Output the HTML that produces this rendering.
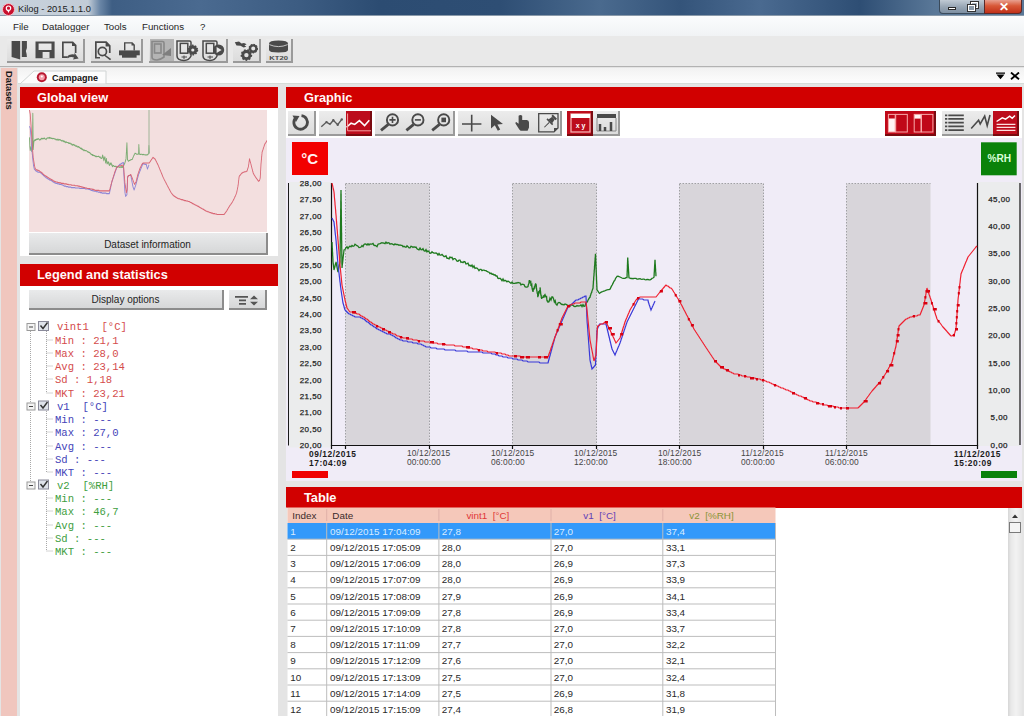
<!DOCTYPE html>
<html><head><meta charset="utf-8">
<style>
*{margin:0;padding:0;box-sizing:border-box}
html,body{width:1024px;height:718px;overflow:hidden;background:#e4e4e4;font-family:"Liberation Sans",sans-serif}
.a{position:absolute}
#title{left:0;top:0;width:1024px;height:16px;background:linear-gradient(90deg,#c9d3dd 0,#c2ccd7 88px,#6a86a6 100px,#3e5e84 112px,#4a6a90 200px,#3c5c82 300px,#2c4c72 380px,#2e4e74 500px,#4a6a8e 600px,#34547a 680px,#4a6a90 760px,#2e4e74 860px,#5a7898 935px);border-bottom:1px solid #8a9aaa}
#title .t{left:18px;top:3.5px;font-size:9.3px;color:#1a1a1a;white-space:nowrap}
#menu{left:0;top:16px;width:1024px;height:20px;background:linear-gradient(#fbfcfd,#f1f3f5)}
#menu span{position:absolute;top:5.3px;font-size:9.7px;color:#1e1e1e;white-space:nowrap}
#tool{left:0;top:36px;width:1024px;height:31px;background:#e9e9e9;border-bottom:1px solid #b2b2b2}
.grp{position:absolute;top:3px;height:24px;background:linear-gradient(#ececec,#dcdcdc);border-right:2px solid #9a9a9a;border-bottom:2px solid #9a9a9a}
#tabs{left:18px;top:68px;width:1006px;height:16px;background:linear-gradient(#f2f2f2,#fdfdfd);border-bottom:1px solid #d6dcd8}
#ds{left:1px;top:68px;width:16px;height:648px;background:#f0c6be}
.hdr{position:absolute;background:#d10000;color:#fff8f8;font-weight:bold;font-size:12.8px;line-height:21.5px}
.btn{position:absolute;background:linear-gradient(#e9eaeb,#d6d7d8);border-right:2px solid #8c8c8c;border-bottom:2px solid #8c8c8c;font-size:10px;color:#1e1e1e;text-align:center}
.mono{font-family:"Liberation Mono",monospace;font-size:10.6px;position:absolute;white-space:pre}
.r{color:#d44c4c}.b{color:#4444b8}.g{color:#3e9e3e}
table{border-collapse:collapse}
</style></head><body>
<!-- title bar -->
<div id="title" class="a">
 <svg class="a" style="left:2px;top:3px" width="13" height="13" viewBox="0 0 13 13"><circle cx="6.5" cy="6.5" r="6" fill="#c8102e" stroke="#f6c0c8" stroke-width="1"/><circle cx="6.5" cy="5.2" r="2.2" fill="none" stroke="#fff" stroke-width="1.2"/><path d="M5.2 7.2 L6.5 10 L7.8 7.2" fill="#fff"/></svg>
 <div class="a t">Kilog - 2015.1.1.0</div>
 <div class="a" style="left:939px;top:0;width:46px;height:14px;background:linear-gradient(#c0cad4,#9aa8b6 50%,#7d8fa2);border:1px solid #3a4a5a;border-top:none;border-radius:0 0 0 4px"></div>
 <div class="a" style="left:948px;top:7px;width:8px;height:3px;background:#fff;border:1px solid #2a2a2a"></div>
 <div class="a" style="left:971px;top:1.5px;width:7px;height:6px;border:1px solid #fff;outline:1px solid #333"></div>
 <div class="a" style="left:968px;top:4.5px;width:7px;height:6px;background:#8a9aaa;border:1px solid #fff;outline:1px solid #333"></div>
 <div class="a" style="left:984px;top:0;width:38px;height:14px;background:linear-gradient(#e8a090,#d85838 45%,#c03018);border:1px solid #5a2a2a;border-top:none;border-radius:0 0 4px 0"></div>
 <div class="a" style="left:998.5px;top:0.5px;font-size:12px;font-weight:bold;color:#fff;line-height:13px">&#x2715;</div>
</div>
<!-- menu -->
<div id="menu" class="a">
 <span style="left:13px">File</span><span style="left:42px">Datalogger</span><span style="left:104px">Tools</span><span style="left:142px">Functions</span><span style="left:200px">?</span>
</div>
<!-- toolbar -->
<div id="tool" class="a">
 <div class="grp" style="left:7px;width:78px"></div>
 <div class="grp" style="left:91px;width:52px"></div>
 <div class="grp" style="left:149px;width:79px"></div>
 <div class="a" style="left:150px;top:3px;width:24px;height:22px;background:#b4b4b4"></div>
 <div class="grp" style="left:233px;width:28px"></div>
 <div class="grp" style="left:266px;width:27px"></div>
 <svg class="a" style="left:0;top:0" width="300" height="31" viewBox="0 36 300 31">
  <g fill="#4a4a4a" stroke="none">
   <!-- open -->
   <path d="M11.6 41 H20.2 V59.4 L11.6 57 Z"/>
   <path d="M21.8 41 H26.9 V48 Q25 51 26.6 54 L26.9 57 H21.8 Z"/>
   <!-- save -->
   <path fill-rule="evenodd" d="M35.5 41.5 H54.6 V58.3 H35.5 Z M38.6 43.4 V50 H51.5 V43.4 Z M42.6 52 V57.9 H49.5 V52 Z"/>
   <!-- export doc -->
   <path d="M62 41.5 H73 L76.5 45 V53 H74.8 V46 H72 V43.2 H63.7 V56.2 H67 V57.9 H62 Z"/>
   <path d="M66.7 57 Q69 53.5 74.5 54.5 L74.5 52.8 L78.6 58.6 L73 59.6 L74 57.4 Q70 56.4 67.8 58.2 Z"/>
   <!-- preview -->
   <path d="M95 41.3 H106.5 L110.6 45.4 V53 H108.9 V46.4 H105.6 V43 H96.7 V56.9 H100 V58.6 H95 Z"/>
   <circle cx="102.4" cy="51.5" r="4.1" fill="none" stroke="#4a4a4a" stroke-width="1.7"/>
   <path d="M104.8 54.6 L111.2 59 L110 60.2 L103.9 55.6 Z"/>
   <!-- printer -->
   <path d="M124 42.2 H132.4 L134.9 44.8 V50.4 H133.5 V45.5 H131.5 V43.5 H125.4 V50.4 H124 Z"/>
   <path d="M119 50.4 H139.8 V55.3 H119 Z"/><path d="M122 54.7 H136.6 V57.7 H122 Z"/>
  </g>
  <!-- device download pressed -->
  <g fill="none" stroke="#7e7e7e" stroke-width="1.6" opacity="0.8">
   <path d="M152 41.5 H162.5 Q164 41.5 164 43 V57 Q160 60 157 60 Q152 60 152 57 Z"/>
   <rect x="154.5" y="44" width="6.5" height="9"/>
  </g>
  <path d="M162 55 L171 48 V56 Z" fill="#7e7e7e"/>
  <g fill="none" stroke="#4a4a4a" stroke-width="1.5">
   <path d="M177 41 H189.5 Q191 41 191 42.5 V56 Q189 60.4 184 60.4 Q177 60.4 177 56 Z"/>
   <rect x="180.3" y="43.4" width="7.5" height="9.8"/>
   <path d="M181.5 57 H187 M184 55.5 V59" stroke-width="1"/>
   <path d="M203 41 H215.5 Q217 41 217 42.5 V56 Q215 60.4 210 60.4 Q203 60.4 203 56 Z"/>
   <rect x="206.3" y="43.4" width="7.5" height="9.8"/>
   <path d="M207.5 57 H213 M210 55.5 V59" stroke-width="1"/>
  </g>
  <!-- gear on device 2 -->
  <circle cx="192.8" cy="50" r="4.6" fill="#4a4a4a" stroke="#4a4a4a" stroke-width="1.6" stroke-dasharray="1.6 1.3"/>
  <circle cx="192.8" cy="50" r="1.6" fill="#e6e6e6"/>
  <!-- play -->
  <circle cx="218.6" cy="50" r="5.6" fill="#4a4a4a"/>
  <path d="M216.6 47 L221.6 50 L216.6 53 Z" fill="#e8e8e8"/>
  <!-- wrench gears -->
  <path d="M234.8 42.3 L239 41.6 L241.5 43.5 L244 43 L246.6 44.3 L244.5 45.4 L246.4 46.8 L243.6 47.6 L240.5 45.8 L236.5 45.4 Z" fill="#4a4a4a"/>
  <circle cx="253.2" cy="48.6" r="3.2" fill="none" stroke="#4a4a4a" stroke-width="2.4"/>
  <circle cx="253.2" cy="48.6" r="4.2" fill="none" stroke="#4a4a4a" stroke-width="1.2" stroke-dasharray="1.5 1.3"/>
  <circle cx="246.4" cy="55.1" r="3.6" fill="none" stroke="#4a4a4a" stroke-width="2.8"/>
  <circle cx="246.4" cy="55.1" r="5" fill="none" stroke="#4a4a4a" stroke-width="1.6" stroke-dasharray="1.8 1.6"/>
  <!-- KT20 -->
  <path d="M269 43.5 Q269 40.5 278.5 40.5 Q288 40.5 288 43.5 V50 Q288 52.5 278.5 52.5 Q269 52.5 269 50 Z" fill="#4a4a4a"/>
  <path d="M269.3 44.6 Q278.5 48.6 287.7 44.6" fill="none" stroke="#cfcfcf" stroke-width="0.9"/>
  <text x="0" y="0" transform="translate(269.2,59.9) scale(1.3,1)" font-family="Liberation Sans" font-weight="bold" font-size="5.9" fill="#4a4a4a">KT20</text>
 </svg>
</div>
<!-- datasets strip -->
<div id="ds" class="a"><div class="a" style="left:2px;top:2.8px;width:12px;height:40px;font-size:9.3px;font-weight:bold;color:#1a1a1a;writing-mode:vertical-rl;line-height:12px">Datasets</div></div>
<!-- tab strip -->
<div id="tabs" class="a">
 <svg class="a" style="left:0;top:0" width="100" height="16" viewBox="18 68 100 16"><path d="M20 84 L34 71 H106 V84 Z" fill="#fcfcfc" stroke="#d0d4d4" stroke-width="1"/></svg>
 <svg class="a" style="left:18px;top:4px" width="12" height="11" viewBox="0 0 12 11"><circle cx="5.8" cy="5.3" r="5" fill="#b81830"/><circle cx="5.8" cy="5.3" r="3" fill="#f4a0ac"/><circle cx="5.8" cy="4.6" r="1" fill="#fff"/></svg>
 <div class="a" style="left:34px;top:4.5px;font-size:9px;font-weight:bold;color:#111">Campagne</div>
 <svg class="a" style="left:978px;top:4px" width="25" height="8" viewBox="978 72 25 8"><path d="M978 72.4 H987 V73.8 H978 Z M978.5 74.6 H986.5 L982.5 79.3 Z" fill="#000"/><path d="M993 72.5 L1001 79.3 M1001 72.5 L993 79.3" stroke="#000" stroke-width="1.8"/></svg>
</div>

<!-- LEFT PANEL -->
<div class="a" style="left:20px;top:107px;width:258px;height:148.5px;background:#fff"></div>
<div class="hdr" style="left:20px;top:87px;width:258px;height:21px;padding-left:17px">Global view</div>
<div class="a" style="left:29px;top:110px;width:238px;height:122px;background:#f3dfdf"></div>
<svg class="a" style="left:0;top:0;overflow:hidden" width="1024" height="718" viewBox="0 0 1024 718">
 <defs><clipPath id="gvc"><rect x="29" y="110" width="238" height="122"/></clipPath></defs>
 <g clip-path="url(#gvc)" fill="none" stroke-width="2.4" opacity="0.6" stroke-linejoin="round">
  <g transform="translate(-93.263,24.996) scale(0.36977,0.46450)">
   <polyline points="332.0,242.0 332.1,243.0 332.1,244.0 332.1,245.0 332.2,246.0 332.2,247.0 332.3,248.0 332.4,249.0 332.4,250.0 332.4,251.0 332.5,252.0 332.6,253.0 332.6,254.0 332.6,255.0 332.7,256.0 332.8,257.0 332.8,258.0 332.9,259.0 332.9,260.0 332.9,261.0 333.0,262.0 333.1,263.0 333.2,264.0 333.4,265.0 333.5,266.0 333.6,267.0 333.8,268.0 333.9,269.0 334.0,270.0 334.2,269.0 334.5,268.0 334.8,267.0 335.0,266.0 335.2,265.0 335.5,264.0 335.8,263.0 336.0,262.0 336.2,263.0 336.4,264.0 336.6,265.0 336.8,266.0 337.0,267.0 337.2,268.0 337.4,269.0 337.6,270.0 337.8,271.0 338.0,272.0 338.2,271.0 338.4,270.0 338.6,269.0 338.8,268.0 339.0,267.0 339.2,266.0 339.4,265.0 339.6,264.0 339.8,263.0 340.0,262.0 340.0,261.0 340.0,260.0 340.0,259.0 340.1,258.0 340.1,257.0 340.1,256.0 340.1,255.0 340.1,254.0 340.1,253.0 340.1,252.0 340.2,251.0 340.2,250.0 340.2,249.0 340.2,248.0 340.2,247.0 340.2,246.0 340.2,245.0 340.2,244.0 340.3,243.0 340.3,242.0 340.3,241.0 340.3,240.0 340.3,239.0 340.3,238.0 340.3,237.0 340.4,236.0 340.4,235.0 340.4,234.0 340.4,233.0 340.4,232.0 340.4,231.0 340.4,230.0 340.5,229.0 340.5,228.0 340.5,227.0 340.5,226.0 340.5,225.0 340.5,224.0 340.5,223.0 340.6,222.0 340.6,221.0 340.6,220.0 340.6,219.0 340.6,218.0 340.6,217.0 340.6,216.0 340.7,215.0 340.7,214.0 340.7,213.0 340.7,212.0 340.7,211.0 340.7,210.0 340.7,209.0 340.8,208.0 340.8,207.0 340.8,206.0 340.8,205.0 340.8,204.0 340.8,203.0 340.8,202.0 340.8,201.0 340.9,200.0 340.9,199.0 340.9,198.0 340.9,197.0 340.9,196.0 340.9,195.0 340.9,194.0 341.0,193.0 341.0,192.0 341.0,191.0 341.0,190.0 341.0,191.0 341.0,192.0 341.0,193.0 341.1,194.0 341.1,195.0 341.1,196.0 341.1,197.0 341.1,198.0 341.1,199.0 341.1,200.0 341.1,201.0 341.2,202.0 341.2,203.0 341.2,204.0 341.2,205.0 341.2,206.0 341.2,207.0 341.2,208.0 341.2,209.0 341.3,210.0 341.3,211.0 341.3,212.0 341.3,213.0 341.3,214.0 341.3,215.0 341.3,216.0 341.3,217.0 341.4,218.0 341.4,219.0 341.4,220.0 341.4,221.0 341.4,222.0 341.4,223.0 341.4,224.0 341.4,225.0 341.5,226.0 341.5,227.0 341.5,228.0 341.5,229.0 341.5,230.0 341.5,231.0 341.5,232.0 341.6,233.0 341.6,234.0 341.6,235.0 341.6,236.0 341.6,237.0 341.6,238.0 341.6,239.0 341.6,240.0 341.7,241.0 341.7,242.0 341.7,243.0 341.7,244.0 341.7,245.0 341.7,246.0 341.7,247.0 341.7,248.0 341.8,249.0 341.8,250.0 341.8,251.0 341.8,252.0 341.8,253.0 341.8,254.0 341.8,255.0 341.8,256.0 341.9,257.0 341.9,258.0 341.9,259.0 341.9,260.0 341.9,261.0 341.9,262.0 341.9,263.0 341.9,264.0 342.0,265.0 342.0,266.0 342.0,267.0 342.0,268.0 342.1,267.0 342.2,266.0 342.3,265.0 342.4,264.0 342.6,263.0 342.7,262.0 342.8,261.0 342.9,260.0 343.0,259.0 343.1,258.0 343.2,257.0 343.3,256.0 343.4,255.0 343.6,254.0 343.7,253.0 343.8,252.0 343.9,251.0 344.0,250.0 345.0,249.5 346.0,247.7 347.0,246.8 348.0,248.5 349.0,247.0 350.0,246.1 351.0,246.9 352.0,245.4 353.0,246.3 354.0,246.0 355.0,244.3 356.0,245.0 357.0,245.7 358.0,246.2 359.0,247.6 360.0,247.4 361.0,247.0 362.0,245.5 363.0,246.6 364.0,244.4 365.0,243.9 366.0,244.2 367.0,245.0 368.0,243.8 369.0,245.0 370.0,244.0 371.0,244.1 372.0,244.1 373.0,243.5 374.0,245.4 375.0,245.5 376.0,245.8 377.0,246.7 378.0,244.2 379.0,243.9 380.0,243.6 381.0,243.1 382.0,242.6 383.0,243.0 384.0,243.1 385.0,243.7 386.0,242.1 387.0,243.4 388.0,242.7 389.0,242.8 390.0,244.2 391.0,243.6 392.0,243.9 393.0,244.4 394.0,244.9 395.0,243.9 396.0,244.5 397.0,244.4 398.0,244.6 399.0,245.3 400.0,244.9 401.0,245.3 402.0,245.3 403.0,246.7 404.0,246.3 405.0,246.9 406.0,247.3 407.0,245.8 408.0,246.7 409.0,247.9 410.0,247.8 411.0,246.3 412.0,246.5 413.0,247.5 414.0,246.7 415.0,247.4 416.0,247.1 417.0,248.8 418.0,249.3 419.0,249.8 420.0,248.1 421.0,249.7 422.0,249.8 423.0,248.7 424.0,250.8 425.0,251.2 426.0,249.7 427.0,251.9 428.0,250.9 429.0,251.6 430.0,253.2 431.0,253.1 432.0,251.8 433.0,252.7 434.0,253.2 435.0,253.1 436.0,253.0 437.0,253.6 438.0,255.0 439.0,253.5 440.0,255.1 441.0,255.2 442.0,254.4 443.0,255.5 444.0,256.5 445.0,256.5 446.0,255.7 447.0,258.3 448.0,258.1 449.0,258.9 450.0,257.0 451.0,257.7 452.0,257.4 453.0,259.6 454.0,258.6 455.0,258.6 456.0,259.6 457.0,261.1 458.0,261.2 459.0,260.1 460.0,260.1 461.0,262.4 462.0,262.0 463.0,262.7 464.0,261.6 465.0,261.9 466.0,263.9 467.0,263.6 468.0,263.1 469.0,265.7 470.0,265.3 471.0,266.3 472.0,265.0 473.0,267.4 474.0,265.9 475.0,268.4 476.0,267.9 477.0,268.1 478.0,269.1 479.0,270.6 480.0,269.4 481.0,269.4 482.0,270.7 483.0,270.2 484.0,270.2 485.0,270.7 486.0,270.7 487.0,271.4 488.0,271.9 489.0,272.2 490.0,273.6 491.0,273.1 492.0,274.2 493.0,274.0 494.0,275.0 495.0,274.8 496.0,276.0 497.0,276.0 498.0,278.4 499.0,278.5 500.0,278.2 501.0,279.2 502.0,280.7 503.0,278.9 504.0,281.0 505.0,280.3 506.0,280.8 507.0,281.9 508.0,281.1 509.0,281.7 510.0,282.5 511.0,283.4 512.0,282.0 513.0,283.4 514.0,283.3 515.0,283.3 516.0,283.0 517.0,283.0 518.0,282.5 519.0,282.9 520.0,282.9 521.0,285.0 522.0,284.1 523.0,284.3 524.0,284.5 525.0,286.7 526.0,287.2 527.0,287.1 528.0,286.5 528.3,284.9 528.6,284.1 528.9,283.8 529.1,281.5 529.4,281.8 529.7,280.0 530.0,282.0 530.2,283.1 530.5,282.2 530.8,281.9 531.0,286.0 531.2,284.2 531.5,285.4 531.8,284.8 532.0,287.5 532.2,288.9 532.5,290.0 532.8,289.7 533.0,292.0 533.4,288.8 533.9,289.0 534.3,287.2 534.7,287.6 535.1,285.0 535.6,283.9 536.0,284.1 536.2,284.8 536.4,287.4 536.5,288.1 536.7,290.1 536.9,290.7 537.1,292.0 537.3,293.7 537.5,292.5 537.6,293.2 537.8,297.1 538.0,294.5 538.2,296.0 538.5,294.6 538.8,291.0 539.0,293.5 539.2,292.7 539.5,290.6 539.8,290.0 540.0,289.4 540.2,287.4 540.3,290.1 540.5,291.0 540.7,293.5 540.8,294.3 541.0,295.4 541.2,295.4 541.3,297.7 541.5,297.8 541.7,298.9 541.8,297.8 542.0,297.9 542.5,297.4 543.0,297.4 543.5,295.3 544.0,297.5 544.5,295.3 545.0,294.6 545.4,295.6 545.8,296.8 546.1,297.0 546.5,295.8 546.9,300.3 547.2,301.1 547.6,301.0 548.0,302.2 549.0,301.7 550.0,298.1 551.0,300.0 552.0,296.9 552.8,297.1 553.6,299.0 554.4,302.0 555.2,300.7 556.0,304.1 557.0,305.1 558.0,303.0 559.0,302.5 560.0,302.9 561.0,303.9 562.0,304.5 563.0,304.5 564.0,305.0 565.0,303.9 566.0,304.3 567.0,304.8 568.0,306.2 569.0,305.3 570.0,306.2 571.0,304.8 572.0,304.9 573.0,305.4 574.0,306.4 575.0,306.5 576.0,306.4 577.0,305.5 578.0,306.0 579.0,305.9 580.0,305.9 581.0,304.8 582.0,306.6 583.0,304.6 584.0,306.4 585.0,306.1 585.6,303.6 586.2,303.0 586.9,302.3 587.5,301.4 588.1,300.0 588.8,298.8 589.4,297.8 590.0,297.4 590.3,295.8 590.7,295.1 591.0,293.7 591.3,293.0 591.7,292.4 592.0,290.7 592.3,290.3 592.7,289.0 593.0,288.3 593.1,287.2 593.1,285.8 593.2,285.3 593.3,284.0 593.4,282.6 593.4,281.6 593.5,281.0 593.6,280.0 593.7,278.8 593.7,277.7 593.8,276.9 593.9,275.9 594.0,275.3 594.0,273.6 594.1,273.2 594.2,272.3 594.2,270.7 594.3,270.3 594.4,269.2 594.5,268.3 594.5,266.8 594.6,265.9 594.7,264.9 594.8,264.4 594.8,263.1 594.9,261.9 595.0,260.9 595.1,259.8 595.1,258.6 595.2,257.7 595.3,257.3 595.4,255.8 595.4,255.3 595.5,253.8 595.5,254.8 595.6,256.0 595.6,256.8 595.7,257.9 595.7,259.4 595.8,260.3 595.8,261.2 595.8,262.1 595.9,263.3 595.9,264.4 596.0,265.0 596.0,266.2 596.0,266.6 596.1,268.2 596.1,269.0 596.2,270.2 596.2,271.1 596.2,271.8 596.3,272.6 596.3,274.3 596.4,274.7 596.4,276.0 596.5,276.9 596.5,277.8 596.5,279.2 596.6,280.4 596.6,280.8 596.7,282.1 596.7,282.8 596.8,284.0 596.8,284.9 596.8,285.7 596.9,286.7 596.9,287.8 597.0,289.3 597.0,290.0 597.8,290.8 598.7,292.3 599.5,293.4 600.5,292.6 601.6,291.9 602.6,291.6 603.7,291.1 604.8,290.9 605.8,290.3 606.9,290.0 607.9,289.6 609.0,289.5 610.0,289.3 610.5,288.2 611.1,286.9 611.6,285.9 612.2,285.0 612.7,283.9 613.2,282.9 613.8,281.6 614.3,280.8 614.8,280.4 615.4,278.7 615.9,278.0 616.5,277.1 617.0,276.3 618.0,276.2 619.0,276.6 620.0,277.0 621.0,277.5 622.0,278.0 623.0,278.4 624.0,278.3 625.0,278.3 626.0,277.6 627.0,277.6 627.0,277.1 627.1,276.3 627.1,274.9 627.1,274.0 627.2,272.5 627.2,271.8 627.2,271.2 627.3,270.1 627.3,269.1 627.4,268.1 627.4,266.5 627.4,265.4 627.5,264.4 627.5,263.7 627.5,262.8 627.6,262.0 627.6,260.8 627.6,259.7 627.7,258.7 627.7,257.5 627.8,258.6 627.8,259.2 627.9,260.8 628.0,261.4 628.0,263.0 628.1,263.8 628.2,264.5 628.2,265.4 628.3,266.5 628.4,267.9 628.4,268.9 628.5,269.5 628.5,270.5 628.6,271.9 628.7,272.9 628.7,273.8 628.8,274.7 628.9,276.0 628.9,276.6 629.0,277.8 630.0,278.1 631.0,278.5 632.0,278.4 633.0,278.7 634.0,278.4 635.0,278.3 636.0,278.4 637.0,279.1 638.0,279.0 639.0,278.8 640.0,278.6 641.0,279.1 642.0,279.3 643.0,279.2 644.0,279.2 645.0,279.6 646.0,279.9 647.0,279.5 648.0,279.4 649.0,279.8 650.0,279.9 651.0,279.4 652.0,278.3 653.0,278.0 654.0,277.2 654.1,276.0 654.1,274.8 654.2,274.4 654.2,272.8 654.3,272.3 654.4,270.8 654.4,269.8 654.5,269.2 654.5,267.8 654.6,267.4 654.6,266.0 654.7,264.7 654.8,263.8 654.8,262.9 654.9,262.1 654.9,261.4 655.0,259.7 655.1,260.9 655.1,261.8 655.2,263.4 655.2,263.7 655.3,264.6 655.4,265.6 655.4,266.9 655.5,268.3 655.6,269.3 655.6,270.2 655.7,271.4 655.8,272.3 655.8,272.9 655.9,273.7 655.9,275.3 656.0,276.2" stroke="#2a8a2a"/>
   <polyline points="332.0,218.0 332.5,219.0 333.0,220.0 333.5,221.0 334.0,222.0 334.1,223.0 334.2,224.0 334.3,225.0 334.4,226.0 334.6,227.0 334.7,228.0 334.8,229.0 334.9,230.0 335.0,231.0 335.1,232.0 335.2,233.0 335.3,234.0 335.4,235.0 335.6,236.0 335.7,237.0 335.8,238.0 335.9,239.0 336.0,240.0 336.1,241.0 336.2,242.0 336.2,243.0 336.3,244.0 336.4,245.0 336.5,246.0 336.6,247.0 336.6,248.0 336.7,249.0 336.8,250.0 336.9,251.0 337.0,252.0 337.0,253.0 337.1,254.0 337.2,255.0 337.3,256.0 337.4,257.0 337.4,258.0 337.5,259.0 337.6,260.0 337.7,261.0 337.8,262.0 337.8,263.0 337.9,264.0 338.0,265.0 338.1,266.0 338.2,267.0 338.4,268.0 338.5,269.0 338.6,270.0 338.7,271.0 338.8,272.0 339.0,273.0 339.1,274.0 339.2,275.0 339.3,276.0 339.4,277.0 339.6,278.0 339.7,279.0 339.8,280.0 339.9,281.0 340.0,282.0 340.2,283.0 340.3,284.0 340.4,285.0 340.5,286.0 340.6,287.0 340.8,288.0 340.9,289.0 341.0,290.0 341.2,291.0 341.3,292.0 341.5,293.0 341.6,294.0 341.8,295.0 341.9,296.0 342.1,297.0 342.2,298.0 342.4,299.0 342.5,300.0 342.7,301.0 342.8,302.0 343.0,303.0 343.3,304.0 343.6,305.0 343.9,306.0 344.1,307.0 344.4,308.0 344.7,309.0 345.0,310.0 346.0,311.0 347.0,312.0 348.0,313.0 349.0,314.0 350.0,314.0 351.0,315.0 352.0,315.0 353.0,316.0 354.0,316.0 355.0,317.0 356.0,317.0 357.0,317.0 358.0,317.0 359.0,317.0 360.0,317.0 361.0,318.0 362.0,318.0 363.0,319.0 364.0,319.0 365.0,320.0 366.0,321.0 367.0,322.0 368.0,322.0 369.0,323.0 370.0,324.0 371.0,325.0 372.0,325.0 373.0,326.0 374.0,327.0 375.0,327.0 376.0,328.0 377.0,329.0 378.0,329.0 379.0,330.0 380.0,330.0 381.0,331.0 382.0,331.0 383.0,332.0 384.0,332.0 385.0,333.0 386.0,333.0 387.0,334.0 388.0,334.0 389.0,334.0 390.0,334.0 391.0,335.0 392.0,335.0 393.0,336.0 394.0,336.0 395.0,337.0 396.0,338.0 397.0,338.0 398.0,339.0 399.0,339.0 400.0,340.0 401.0,340.0 402.0,340.0 403.0,341.0 404.0,341.0 405.0,341.0 406.0,341.0 407.0,341.0 408.0,342.0 409.0,342.0 410.0,342.0 411.0,342.0 412.0,342.0 413.0,343.0 414.0,343.0 415.0,343.0 416.0,343.0 417.0,343.0 418.0,344.0 419.0,344.0 420.0,344.0 421.0,344.0 422.0,345.0 423.0,345.0 424.0,346.0 425.0,346.0 426.0,347.0 427.0,347.0 428.0,347.0 429.0,347.0 430.0,347.0 431.0,348.0 432.0,348.0 433.0,348.0 434.0,348.0 435.0,348.0 436.0,348.0 437.0,349.0 438.0,349.0 439.0,349.0 440.0,349.0 441.0,349.0 442.0,349.0 443.0,349.0 444.0,349.0 445.0,350.0 446.0,350.0 447.0,350.0 448.0,350.0 449.0,350.0 450.0,350.0 451.0,350.0 452.0,350.0 453.0,350.0 454.0,350.0 455.0,350.0 456.0,351.0 457.0,351.0 458.0,351.0 459.0,351.0 460.0,351.0 461.0,351.0 462.0,351.0 463.0,351.0 464.0,351.0 465.0,351.0 466.0,351.0 467.0,351.0 468.0,352.0 469.0,352.0 470.0,352.0 471.0,352.0 472.0,352.0 473.0,352.0 474.0,352.0 475.0,352.0 476.0,352.0 477.0,352.0 478.0,352.0 479.0,352.0 480.0,352.0 481.0,352.0 482.0,352.0 483.0,353.0 484.0,353.0 485.0,353.0 486.0,353.0 487.0,353.0 488.0,353.0 489.0,353.0 490.0,353.0 491.0,353.0 492.0,354.0 493.0,354.0 494.0,354.0 495.0,354.0 496.0,355.0 497.0,355.0 498.0,355.0 499.0,356.0 500.0,356.0 501.0,356.0 502.0,356.0 503.0,357.0 504.0,357.0 505.0,357.0 506.0,357.0 507.0,357.0 508.0,358.0 509.0,358.0 510.0,358.0 511.0,358.0 512.0,358.0 513.0,359.0 514.0,359.0 515.0,359.0 516.0,359.0 517.0,359.0 518.0,360.0 519.0,360.0 520.0,360.0 521.0,360.0 522.0,360.0 523.0,361.0 524.0,361.0 525.0,361.0 526.0,361.0 527.0,361.0 528.0,362.0 529.0,362.0 530.0,362.0 531.0,362.0 532.0,362.0 533.0,362.0 534.0,362.0 535.0,362.0 536.0,362.0 537.0,362.0 538.0,362.0 539.0,362.0 540.0,363.0 541.0,363.0 542.0,363.0 543.0,363.0 544.0,363.0 545.0,363.0 546.0,363.0 547.0,363.0 548.0,363.0 548.3,362.0 548.5,361.0 548.8,360.0 549.1,359.0 549.3,358.0 549.6,357.0 549.9,356.0 550.2,355.0 550.4,354.0 550.7,353.0 551.0,352.0 551.2,351.0 551.5,350.0 551.8,349.0 552.0,348.0 552.3,347.0 552.6,346.0 552.8,345.0 553.1,344.0 553.4,343.0 553.7,342.0 553.9,341.0 554.2,340.0 554.5,339.0 554.7,338.0 555.0,337.0 555.4,336.0 555.9,335.0 556.3,334.0 556.7,333.0 557.2,332.0 557.6,331.0 558.0,330.0 558.5,329.0 558.9,328.0 559.3,327.0 559.8,326.0 560.2,325.0 560.6,324.0 561.1,323.0 561.5,322.0 561.9,321.0 562.4,320.0 562.8,319.0 563.2,318.0 563.7,317.0 564.1,316.0 564.5,315.0 565.0,314.0 565.4,313.0 565.8,312.0 566.3,311.0 566.7,310.0 567.1,309.0 567.6,308.0 568.0,307.0 569.0,306.0 570.0,305.0 571.0,305.0 572.0,304.0 573.0,303.0 574.0,302.0 575.0,301.0 576.0,300.0 577.0,300.0 578.0,300.0 579.0,299.0 580.0,299.0 581.0,298.0 582.0,298.0 583.0,297.0 584.0,297.0 585.0,296.0 586.0,296.0 586.0,297.0 586.1,298.0 586.1,299.0 586.2,300.0 586.2,301.0 586.2,302.0 586.3,303.0 586.3,304.0 586.4,305.0 586.4,306.0 586.5,307.0 586.5,308.0 586.5,309.0 586.6,310.0 586.6,311.0 586.7,312.0 586.7,313.0 586.8,314.0 586.8,315.0 586.8,316.0 586.9,317.0 586.9,318.0 587.0,319.0 587.0,320.0 587.1,321.0 587.1,322.0 587.2,323.0 587.3,324.0 587.4,325.0 587.5,326.0 587.5,327.0 587.6,328.0 587.7,329.0 587.8,330.0 587.8,331.0 587.9,332.0 588.0,333.0 588.0,334.0 588.1,335.0 588.2,336.0 588.3,337.0 588.4,338.0 588.4,339.0 588.5,340.0 588.6,341.0 588.6,342.0 588.7,343.0 588.8,344.0 588.9,345.0 589.0,346.0 589.0,347.0 589.1,348.0 589.2,349.0 589.2,350.0 589.3,351.0 589.4,352.0 589.5,353.0 589.5,354.0 589.6,355.0 589.7,356.0 589.8,357.0 589.9,358.0 589.9,359.0 590.0,360.0 590.2,361.0 590.4,362.0 590.7,363.0 590.9,364.0 591.1,365.0 591.3,366.0 591.6,367.0 591.8,368.0 592.0,369.0 592.9,368.0 593.8,367.0 594.6,366.0 595.5,365.0 595.5,364.0 595.6,363.0 595.6,362.0 595.7,361.0 595.7,360.0 595.8,359.0 595.8,358.0 595.8,357.0 595.9,356.0 595.9,355.0 596.0,354.0 596.0,353.0 596.1,352.0 596.1,351.0 596.1,350.0 596.2,349.0 596.2,348.0 596.3,347.0 596.3,346.0 596.4,345.0 596.4,344.0 596.4,343.0 596.5,342.0 596.5,341.0 596.6,340.0 596.6,339.0 596.7,338.0 596.7,337.0 596.7,336.0 596.8,335.0 596.8,334.0 596.9,333.0 596.9,332.0 597.0,331.0 597.0,330.0 597.4,329.0 597.8,328.0 598.2,327.0 598.7,326.0 599.1,325.0 599.5,324.0 600.6,324.0 601.7,324.0 602.8,324.0 603.8,324.0 604.9,324.0 606.0,324.0 606.2,325.0 606.5,326.0 606.7,327.0 607.0,328.0 607.2,329.0 607.4,330.0 607.7,331.0 607.9,332.0 608.2,333.0 608.4,334.0 608.6,335.0 608.9,336.0 609.1,337.0 609.4,338.0 609.6,339.0 609.8,340.0 610.1,341.0 610.3,342.0 610.6,343.0 610.8,344.0 611.0,345.0 611.3,346.0 611.5,347.0 611.8,348.0 612.0,349.0 612.5,350.0 613.0,351.0 613.5,352.0 614.0,353.0 614.5,354.0 615.0,355.0 615.4,354.0 615.8,353.0 616.2,352.0 616.7,351.0 617.1,350.0 617.5,349.0 617.9,348.0 618.3,347.0 618.8,346.0 619.2,345.0 619.6,344.0 620.0,343.0 620.3,342.0 620.7,341.0 621.0,340.0 621.3,339.0 621.7,338.0 622.0,337.0 622.3,336.0 622.7,335.0 623.0,334.0 623.3,333.0 623.7,332.0 624.0,331.0 624.3,330.0 624.7,329.0 625.0,328.0 625.3,327.0 625.7,326.0 626.0,325.0 626.3,324.0 626.7,323.0 627.0,322.0 627.5,321.0 628.0,320.0 628.5,319.0 629.0,318.0 629.5,317.0 630.0,316.0 630.5,315.0 631.0,314.0 631.5,313.0 632.0,312.0 632.5,311.0 633.0,310.0 633.5,309.0 634.0,308.0 634.5,307.0 635.0,306.0 635.5,305.0 636.0,304.0 636.5,303.0 637.0,302.0 637.5,301.0 638.0,300.0 638.5,298.0 639.6,299.0 640.6,299.0 641.7,299.0 642.7,299.0 643.8,300.0 644.8,300.0 645.9,300.0 646.9,300.0 648.0,300.0 648.3,302.0 648.7,303.0 649.0,304.0 649.3,305.0 649.7,306.0 650.0,307.0 650.3,308.0 650.7,309.0 651.0,310.0 651.4,309.0 651.9,308.0 652.3,307.0 652.8,306.0 653.2,305.0 653.7,304.0 654.1,303.0 654.6,302.0 655.0,301.0" stroke="#4a4ad0"/>
   <polyline points="332.0,183.0 332.2,184.0 332.4,185.0 332.7,186.0 332.9,187.0 333.1,188.0 333.3,189.0 333.6,190.0 333.8,191.0 334.0,192.0 334.1,193.0 334.2,194.0 334.3,195.0 334.3,196.0 334.4,197.0 334.5,198.0 334.6,199.0 334.7,200.0 334.8,201.0 334.9,202.0 335.0,203.0 335.0,204.0 335.1,205.0 335.2,206.0 335.3,207.0 335.4,208.0 335.5,209.0 335.6,210.0 335.7,211.0 335.7,212.0 335.8,213.0 335.9,214.0 336.0,215.0 336.1,216.0 336.2,217.0 336.2,218.0 336.3,219.0 336.4,220.0 336.5,221.0 336.6,222.0 336.6,223.0 336.7,224.0 336.8,225.0 336.9,226.0 337.0,227.0 337.0,228.0 337.1,229.0 337.2,230.0 337.3,231.0 337.4,232.0 337.4,233.0 337.5,234.0 337.6,235.0 337.7,236.0 337.8,237.0 337.8,238.0 337.9,239.0 338.0,240.0 338.1,241.0 338.2,242.0 338.2,243.0 338.3,244.0 338.4,245.0 338.5,246.0 338.6,247.0 338.6,248.0 338.7,249.0 338.8,250.0 338.9,251.0 339.0,252.0 339.0,253.0 339.1,254.0 339.2,255.0 339.3,256.0 339.4,257.0 339.4,258.0 339.5,259.0 339.6,260.0 339.7,261.0 339.8,262.0 339.8,263.0 339.9,264.0 340.0,265.0 340.1,266.0 340.2,267.0 340.3,268.0 340.4,269.0 340.5,270.0 340.6,271.0 340.7,272.0 340.8,273.0 340.9,274.0 341.0,275.0 341.1,276.0 341.2,277.0 341.3,278.0 341.4,279.0 341.5,280.0 341.6,281.0 341.7,282.0 341.8,283.0 341.9,284.0 342.0,285.0 342.2,286.0 342.4,287.0 342.6,288.0 342.8,289.0 343.0,290.0 343.2,291.0 343.4,292.0 343.6,293.0 343.8,294.0 344.0,295.0 344.2,296.0 344.4,297.0 344.6,298.0 344.8,299.0 345.0,300.0 345.2,301.0 345.5,302.0 345.8,303.0 346.0,304.0 346.2,305.0 346.5,306.0 346.8,307.0 347.0,308.0 347.8,309.0 348.5,310.0 349.2,311.0 350.0,312.0 351.0,312.0 352.0,312.0 353.0,312.0 354.0,313.0 355.0,313.0 356.0,313.0 357.0,314.0 358.0,314.0 359.0,314.0 360.0,315.0 361.0,316.0 362.0,316.0 363.0,317.0 364.0,317.0 365.0,318.0 366.0,319.0 367.0,319.0 368.0,320.0 369.0,321.0 370.0,322.0 371.0,322.0 372.0,323.0 373.0,324.0 374.0,324.0 375.0,325.0 376.0,325.0 377.0,326.0 378.0,326.0 379.0,327.0 380.0,327.0 381.0,328.0 382.0,328.0 383.0,329.0 384.0,329.0 385.0,330.0 386.0,330.0 387.0,331.0 388.0,331.0 389.0,332.0 390.0,332.0 391.0,333.0 392.0,333.0 393.0,334.0 394.0,334.0 395.0,334.0 396.0,335.0 397.0,336.0 398.0,336.0 399.0,336.0 400.0,337.0 401.0,337.0 402.0,337.0 403.0,338.0 404.0,338.0 405.0,338.0 406.0,338.0 407.0,338.0 408.0,339.0 409.0,339.0 410.0,339.0 411.0,339.0 412.0,339.0 413.0,340.0 414.0,340.0 415.0,340.0 416.0,340.0 417.0,340.0 418.0,341.0 419.0,341.0 420.0,341.0 421.0,341.0 422.0,341.0 423.0,341.0 424.0,341.0 425.0,342.0 426.0,342.0 427.0,342.0 428.0,342.0 429.0,342.0 430.0,342.0 431.0,342.0 432.0,342.0 433.0,343.0 434.0,343.0 435.0,343.0 436.0,343.0 437.0,343.0 438.0,344.0 439.0,344.0 440.0,344.0 441.0,344.0 442.0,344.0 443.0,344.0 444.0,344.0 445.0,344.0 446.0,345.0 447.0,345.0 448.0,345.0 449.0,345.0 450.0,345.0 451.0,345.0 452.0,345.0 453.0,345.0 454.0,345.0 455.0,346.0 456.0,346.0 457.0,346.0 458.0,346.0 459.0,346.0 460.0,346.0 461.0,346.0 462.0,346.0 463.0,347.0 464.0,347.0 465.0,347.0 466.0,347.0 467.0,347.0 468.0,348.0 469.0,348.0 470.0,348.0 471.0,348.0 472.0,348.0 473.0,349.0 474.0,349.0 475.0,349.0 476.0,349.0 477.0,349.0 478.0,350.0 479.0,350.0 480.0,350.0 481.0,350.0 482.0,350.0 483.0,351.0 484.0,351.0 485.0,351.0 486.0,351.0 487.0,351.0 488.0,352.0 489.0,352.0 490.0,352.0 491.0,352.0 492.0,352.0 493.0,352.0 494.0,352.0 495.0,352.0 496.0,353.0 497.0,353.0 498.0,353.0 499.0,353.0 500.0,353.0 501.0,353.0 502.0,354.0 503.0,354.0 504.0,354.0 505.0,354.0 506.0,355.0 507.0,355.0 508.0,355.0 509.0,356.0 510.0,356.0 511.0,356.0 512.0,356.0 513.0,356.0 514.0,356.0 515.0,356.0 516.0,356.0 517.0,356.0 518.0,356.0 519.0,356.0 520.0,356.0 521.0,357.0 522.0,357.0 523.0,357.0 524.0,357.0 525.0,357.0 526.0,357.0 527.0,357.0 528.0,357.0 529.0,357.0 530.0,357.0 531.0,357.0 532.0,357.0 533.0,357.0 534.0,357.0 535.0,357.0 536.0,357.0 537.0,357.0 538.0,357.0 539.0,357.0 540.0,357.0 541.0,357.0 542.0,357.0 543.0,357.0 544.0,357.0 545.0,357.0 546.0,357.0 547.0,357.0 548.0,357.0 548.4,356.0 548.7,355.0 549.0,354.0 549.4,353.0 549.8,352.0 550.1,351.0 550.5,350.0 550.8,349.0 551.1,348.0 551.5,347.0 551.9,346.0 552.2,345.0 552.5,344.0 552.9,343.0 553.2,342.0 553.6,341.0 554.0,340.0 554.3,339.0 554.6,338.0 555.0,337.0 555.4,336.0 555.7,335.0 556.1,334.0 556.5,333.0 556.8,332.0 557.2,331.0 557.6,330.0 557.9,329.0 558.3,328.0 558.7,327.0 559.1,326.0 559.4,325.0 559.8,324.0 560.2,323.0 560.5,322.0 560.9,321.0 561.3,320.0 561.6,319.0 562.0,318.0 562.5,317.0 563.0,316.0 563.5,315.0 564.0,314.0 564.5,313.0 565.0,312.0 565.5,311.0 566.0,310.0 566.5,309.0 567.0,308.0 567.5,307.0 568.0,306.0 569.0,306.0 570.0,305.0 571.0,305.0 572.0,304.0 573.0,304.0 574.0,304.0 575.0,303.0 576.0,303.0 577.0,303.0 578.0,303.0 579.0,303.0 580.0,303.0 581.0,302.0 582.0,302.0 583.0,302.0 584.0,302.0 585.0,302.0 586.0,302.0 586.1,303.0 586.2,304.0 586.4,305.0 586.5,306.0 586.6,307.0 586.8,308.0 586.9,309.0 587.0,310.0 587.1,311.0 587.2,312.0 587.3,313.0 587.4,314.0 587.5,315.0 587.6,316.0 587.7,317.0 587.8,318.0 587.9,319.0 588.0,320.0 588.1,321.0 588.2,322.0 588.3,323.0 588.4,324.0 588.5,325.0 588.6,326.0 588.7,327.0 588.8,328.0 588.9,329.0 589.0,330.0 589.1,331.0 589.2,332.0 589.3,333.0 589.4,334.0 589.5,335.0 589.6,336.0 589.7,337.0 589.8,338.0 589.9,339.0 590.0,340.0 590.2,341.0 590.4,342.0 590.6,343.0 590.8,344.0 591.0,345.0 591.1,346.0 591.3,347.0 591.5,348.0 591.7,349.0 591.9,350.0 592.1,351.0 592.3,352.0 592.5,353.0 592.7,354.0 592.9,355.0 593.0,356.0 593.2,357.0 593.4,358.0 593.6,359.0 593.8,360.0 594.0,361.0 594.3,360.0 594.7,359.0 595.0,358.0 595.3,357.0 595.7,356.0 596.0,355.0 596.1,354.0 596.1,353.0 596.2,352.0 596.2,351.0 596.3,350.0 596.3,349.0 596.4,348.0 596.4,347.0 596.5,346.0 596.5,345.0 596.6,344.0 596.6,343.0 596.7,342.0 596.7,341.0 596.8,340.0 596.8,339.0 596.9,338.0 596.9,337.0 597.0,336.0 597.0,335.0 597.1,334.0 597.1,333.0 597.2,332.0 597.2,331.0 597.3,330.0 597.3,329.0 597.4,328.0 597.4,327.0 597.5,326.0 598.6,326.0 599.6,325.0 600.7,324.0 601.8,324.0 602.8,324.0 603.9,323.0 604.9,322.0 606.0,322.0 606.5,323.0 607.0,324.0 607.5,325.0 608.0,326.0 608.5,327.0 609.0,328.0 609.5,329.0 610.0,330.0 610.5,331.0 610.9,332.0 611.4,333.0 611.8,334.0 612.3,335.0 612.8,336.0 613.2,337.0 613.7,338.0 614.2,339.0 614.6,340.0 615.1,341.0 615.5,342.0 616.0,343.0 616.8,342.0 617.6,341.0 618.4,340.0 619.2,339.0 620.0,338.0 620.3,337.0 620.6,336.0 620.9,335.0 621.2,334.0 621.6,333.0 621.9,332.0 622.2,331.0 622.5,330.0 622.8,329.0 623.1,328.0 623.4,327.0 623.8,326.0 624.1,325.0 624.4,324.0 624.7,323.0 625.0,322.0 625.4,321.0 625.8,320.0 626.2,319.0 626.7,318.0 627.1,317.0 627.5,316.0 627.9,315.0 628.3,314.0 628.8,313.0 629.2,312.0 629.6,311.0 630.0,310.0 630.6,309.0 631.2,308.0 631.8,307.0 632.4,306.0 633.0,305.0 633.6,304.0 634.2,303.0 634.8,302.0 635.4,301.0 636.0,300.0 637.0,299.0 638.0,298.0 639.0,298.0 640.0,297.0 641.0,297.0 642.0,297.0 643.0,297.0 644.0,297.0 645.0,297.0 646.0,297.0 647.0,297.0 648.0,297.0 649.0,297.0 650.0,297.0 651.0,297.0 652.0,297.0 653.0,297.0 654.0,297.0 655.0,297.0 656.0,297.0 656.8,296.0 657.6,295.0 658.4,294.0 659.2,293.0 660.0,292.0 660.9,291.0 661.7,290.0 662.6,289.0 663.4,288.0 664.3,287.0 665.1,286.0 666.0,285.0 667.0,286.0 668.0,286.0 669.0,287.0 670.0,288.0 671.0,288.0 672.0,289.0 672.6,290.0 673.2,291.0 673.8,292.0 674.5,293.0 675.1,294.0 675.7,295.0 676.3,296.0 676.9,297.0 677.5,298.0 678.2,299.0 678.8,300.0 679.4,301.0 680.0,302.0 680.5,303.0 681.0,304.0 681.6,305.0 682.1,306.0 682.6,307.0 683.1,308.0 683.6,309.0 684.1,310.0 684.7,311.0 685.2,312.0 685.7,313.0 686.2,314.0 686.7,315.0 687.3,316.0 687.8,317.0 688.3,318.0 688.8,319.0 689.3,320.0 689.9,321.0 690.4,322.0 690.9,323.0 691.4,324.0 691.9,325.0 692.4,326.0 693.0,327.0 693.5,328.0 694.0,329.0 694.6,330.0 695.3,331.0 695.9,332.0 696.6,333.0 697.2,334.0 697.9,335.0 698.5,336.0 699.2,337.0 699.8,338.0 700.5,339.0 701.1,340.0 701.8,341.0 702.4,342.0 703.1,343.0 703.7,344.0 704.4,345.0 705.0,346.0 705.7,347.0 706.3,348.0 707.0,349.0 707.7,350.0 708.3,351.0 709.0,352.0 709.7,353.0 710.3,354.0 711.0,355.0 711.7,356.0 712.3,357.0 713.0,358.0 713.7,359.0 714.3,360.0 715.0,361.0 716.0,362.0 717.0,363.0 718.0,364.0 719.0,365.0 720.0,366.0 721.0,367.0 722.0,368.0 723.0,368.0 724.0,369.0 725.0,369.0 726.0,370.0 727.0,370.0 728.0,371.0 729.0,371.0 730.0,372.0 731.0,372.0 732.0,373.0 733.0,373.0 734.0,374.0 735.0,374.0 736.0,374.0 737.0,374.0 738.0,374.0 739.0,375.0 740.0,375.0 741.0,375.0 742.0,376.0 743.0,376.0 744.0,376.0 745.0,376.0 746.0,376.0 747.0,377.0 748.0,377.0 749.0,377.0 750.0,377.0 751.0,378.0 752.0,378.0 753.0,378.0 754.0,378.0 755.0,378.0 756.0,379.0 757.0,379.0 758.0,379.0 759.0,379.0 760.0,379.0 761.0,380.0 762.0,380.0 763.0,380.0 764.0,380.0 765.0,381.0 766.0,381.0 767.0,382.0 768.0,382.0 769.0,382.0 770.0,383.0 771.0,383.0 772.0,384.0 773.0,384.0 774.0,385.0 775.0,385.0 776.0,385.0 777.0,386.0 778.0,386.0 779.0,387.0 780.0,387.0 781.0,388.0 782.0,388.0 783.0,388.0 784.0,389.0 785.0,389.0 786.0,390.0 787.0,390.0 788.0,390.0 789.0,391.0 790.0,391.0 791.0,392.0 792.0,392.0 793.0,393.0 794.0,393.0 795.0,394.0 796.0,394.0 797.0,395.0 798.0,395.0 799.0,396.0 800.0,396.0 801.0,396.0 802.0,397.0 803.0,397.0 804.0,398.0 805.0,398.0 806.0,399.0 807.0,399.0 808.0,400.0 809.0,400.0 810.0,401.0 811.0,401.0 812.0,401.0 813.0,402.0 814.0,402.0 815.0,402.0 816.0,402.0 817.0,403.0 818.0,403.0 819.0,403.0 820.0,404.0 821.0,404.0 822.0,404.0 823.0,404.0 824.0,405.0 825.0,405.0 826.0,405.0 827.0,405.0 828.0,406.0 829.0,406.0 830.0,406.0 831.0,406.0 832.0,406.0 833.0,406.0 834.0,407.0 835.0,407.0 836.0,407.0 837.0,407.0 838.0,407.0 839.0,408.0 840.0,408.0 841.0,408.0 842.0,408.0 843.0,408.0 844.0,408.0 845.0,408.0 846.0,408.0 847.0,408.0 848.0,408.0 849.0,408.0 850.0,408.0 851.0,408.0 852.0,408.0 853.0,408.0 854.0,408.0 855.0,408.0 856.0,408.0 857.0,408.0 858.0,408.0 859.0,407.0 860.0,406.0 861.0,405.0 862.0,404.0 863.0,403.0 864.0,402.0 864.7,401.0 865.5,400.0 866.2,399.0 866.9,398.0 867.6,397.0 868.4,396.0 869.1,395.0 869.8,394.0 870.5,393.0 871.3,392.0 872.0,391.0 872.9,390.0 873.8,389.0 874.7,388.0 875.6,387.0 876.4,386.0 877.3,385.0 878.2,384.0 879.1,383.0 880.0,382.0 880.7,381.0 881.3,380.0 882.0,379.0 882.7,378.0 883.3,377.0 884.0,376.0 884.7,375.0 885.3,374.0 886.0,373.0 886.5,372.0 887.1,371.0 887.6,370.0 888.2,369.0 888.7,368.0 889.3,367.0 889.8,366.0 890.4,365.0 890.9,364.0 891.5,363.0 892.0,362.0 892.2,361.0 892.5,360.0 892.8,359.0 893.0,358.0 893.2,357.0 893.5,356.0 893.8,355.0 894.0,354.0 894.2,353.0 894.5,352.0 894.8,351.0 895.0,350.0 895.2,349.0 895.5,348.0 895.8,347.0 896.0,346.0 896.1,345.0 896.3,344.0 896.5,343.0 896.6,342.0 896.8,341.0 896.9,340.0 897.0,339.0 897.2,338.0 897.4,337.0 897.5,336.0 897.6,335.0 897.8,334.0 898.0,333.0 898.1,332.0 898.2,331.0 898.4,330.0 898.5,329.0 898.7,328.0 898.9,327.0 899.0,326.0 900.0,325.0 901.0,324.0 902.0,323.0 903.0,322.0 904.0,321.0 905.0,320.0 906.0,319.0 907.0,319.0 908.0,318.0 909.0,318.0 910.0,317.0 911.0,317.0 912.0,317.0 913.0,316.0 914.0,316.0 915.0,316.0 916.0,316.0 917.0,316.0 918.0,315.0 919.0,315.0 920.0,315.0 920.4,314.0 920.8,313.0 921.2,312.0 921.6,311.0 922.0,310.0 922.4,309.0 922.8,308.0 923.2,307.0 923.6,306.0 924.0,305.0 924.2,304.0 924.4,303.0 924.5,302.0 924.7,301.0 924.9,300.0 925.1,299.0 925.2,298.0 925.4,297.0 925.6,296.0 925.8,295.0 925.9,294.0 926.1,293.0 926.3,292.0 926.5,291.0 926.6,290.0 926.8,289.0 927.0,288.0 927.3,289.0 927.7,290.0 928.0,291.0 928.3,292.0 928.7,293.0 929.0,294.0 929.3,295.0 929.7,296.0 930.0,297.0 930.3,298.0 930.7,299.0 931.0,300.0 931.3,301.0 931.6,302.0 931.9,303.0 932.3,304.0 932.6,305.0 932.9,306.0 933.2,307.0 933.5,308.0 933.8,309.0 934.2,310.0 934.5,311.0 934.8,312.0 935.1,313.0 935.4,314.0 935.7,315.0 936.1,316.0 936.4,317.0 936.7,318.0 937.0,319.0 937.8,320.0 938.5,321.0 939.2,322.0 940.0,323.0 940.8,324.0 941.5,325.0 942.2,326.0 943.0,327.0 943.9,328.0 944.8,329.0 945.7,330.0 946.6,331.0 947.4,332.0 948.3,333.0 949.2,334.0 950.1,335.0 951.0,336.0 952.0,336.0 953.0,335.0 954.0,335.0 954.3,334.0 954.7,333.0 955.0,332.0 955.3,331.0 955.7,330.0 956.0,329.0 956.1,328.0 956.1,327.0 956.2,326.0 956.3,325.0 956.3,324.0 956.4,323.0 956.5,322.0 956.6,321.0 956.6,320.0 956.7,319.0 956.8,318.0 956.8,317.0 956.9,316.0 957.0,315.0 957.0,314.0 957.1,313.0 957.2,312.0 957.2,311.0 957.3,310.0 957.4,309.0 957.4,308.0 957.5,307.0 957.6,306.0 957.7,305.0 957.7,304.0 957.8,303.0 957.9,302.0 957.9,301.0 958.0,300.0 958.1,299.0 958.2,298.0 958.3,297.0 958.5,296.0 958.6,295.0 958.7,294.0 958.8,293.0 958.9,292.0 959.0,291.0 959.2,290.0 959.3,289.0 959.4,288.0 959.5,287.0 959.6,286.0 959.7,285.0 959.8,284.0 960.0,283.0 960.1,282.0 960.2,281.0 960.3,280.0 960.4,279.0 960.5,278.0 960.7,277.0 960.8,276.0 960.9,275.0 961.0,274.0 961.4,273.0 961.8,272.0 962.2,271.0 962.6,270.0 963.1,269.0 963.5,268.0 963.9,267.0 964.3,266.0 964.7,265.0 965.1,264.0 965.5,263.0 965.9,262.0 966.4,261.0 966.8,260.0 967.2,259.0 967.6,258.0 968.0,257.0 968.8,256.0 969.6,255.0 970.4,254.0 971.2,253.0 972.0,252.0 972.8,251.0 973.6,250.0 974.4,249.0 975.2,248.0 976.0,247.0 977.0,246.0" stroke="#c81830"/>
  </g>
  <path d="M149 154 V110" stroke="#6a9a6a" stroke-width="1"/>
 </g>
</svg>
<div class="btn" style="left:29px;top:233px;width:239px;height:22px;line-height:23px">Dataset information</div>

<div class="a" style="left:20px;top:286px;width:258px;height:432px;background:#fff"></div>
<div class="hdr" style="left:20px;top:264px;width:258px;height:22px;padding-left:17px;line-height:22.5px">Legend and statistics</div>
<div class="btn" style="left:29px;top:290px;width:195px;height:20px;line-height:19px">Display options</div>
<div class="btn" style="left:229px;top:290px;width:38px;height:20px"></div>
<svg class="a" style="left:229px;top:290.5px" width="38" height="19" viewBox="0 0 38 19"><path d="M6 5 H19 V6.8 H6 Z M10 8.5 H17 V10.3 H10 Z M10 12 H17 V13.8 H10 Z" fill="#555"/><path d="M21 8.2 L25 4.5 L29 8.2 Z M21 10.8 L25 14.5 L29 10.8 Z" fill="#555"/></svg>

<!-- legend tree -->
<svg class="a" style="left:0;top:0" width="300" height="718" viewBox="0 0 300 718">
 <g stroke="#a8a8a8" stroke-width="1" stroke-dasharray="1 1" fill="none">
  <path d="M30.5 331 V406 M30.5 412 V485"/>
  <path d="M46.5 331 V393 H53 M46.5 340 H53 M46.5 353 H53 M46.5 366 H53 M46.5 379 H53"/>
  <path d="M46.5 411 V472 H53 M46.5 419 H53 M46.5 432 H53 M46.5 446 H53 M46.5 459 H53"/>
  <path d="M46.5 491 V551 H53 M46.5 498 H53 M46.5 511 H53 M46.5 525 H53 M46.5 538 H53"/>
 </g>
 <g>
  <rect x="27" y="323.5" width="8" height="7" fill="#f4f4f4" stroke="#9a9a9a"/><path d="M29 327 H33" stroke="#444"/>
  <rect x="38.5" y="321.5" width="10" height="9" fill="#dfe3ea" stroke="#8a8a9a"/><path d="M40.5 325.5 L43 328.5 L47.5 322.5" stroke="#333" stroke-width="1.4" fill="none"/>
  <rect x="27" y="403" width="8" height="7" fill="#f4f4f4" stroke="#9a9a9a"/><path d="M29 406.5 H33" stroke="#444"/>
  <rect x="38.5" y="401" width="10" height="9" fill="#dfe3ea" stroke="#8a8a9a"/><path d="M40.5 405 L43 408 L47.5 402" stroke="#333" stroke-width="1.4" fill="none"/>
  <rect x="27" y="482" width="8" height="7" fill="#f4f4f4" stroke="#9a9a9a"/><path d="M29 485.5 H33" stroke="#444"/>
  <rect x="38.5" y="480" width="10" height="9" fill="#dfe3ea" stroke="#8a8a9a"/><path d="M40.5 484 L43 487 L47.5 481" stroke="#333" stroke-width="1.4" fill="none"/>
 </g>
</svg>
<div class="mono r" style="left:57px;top:320.5px">vint1  [°C]</div>
<div class="mono r" style="left:55px;top:334.5px">Min : 21,1</div>
<div class="mono r" style="left:55px;top:347.5px">Max : 28,0</div>
<div class="mono r" style="left:55px;top:360.5px">Avg : 23,14</div>
<div class="mono r" style="left:55px;top:373.5px">Sd : 1,18</div>
<div class="mono r" style="left:55px;top:387.5px">MKT : 23,21</div>
<div class="mono b" style="left:57px;top:400.5px">v1  [°C]</div>
<div class="mono b" style="left:55px;top:413.5px">Min : ---</div>
<div class="mono b" style="left:55px;top:426.5px">Max : 27,0</div>
<div class="mono b" style="left:55px;top:440.5px">Avg : ---</div>
<div class="mono b" style="left:55px;top:453.5px">Sd : ---</div>
<div class="mono b" style="left:55px;top:466.5px">MKT : ---</div>
<div class="mono g" style="left:57px;top:479.5px">v2  [%RH]</div>
<div class="mono g" style="left:55px;top:492.5px">Min : ---</div>
<div class="mono g" style="left:55px;top:505.5px">Max : 46,7</div>
<div class="mono g" style="left:55px;top:519.5px">Avg : ---</div>
<div class="mono g" style="left:55px;top:532.5px">Sd : ---</div>
<div class="mono g" style="left:55px;top:545.5px">MKT : ---</div>

<!-- GRAPHIC PANEL -->
<div class="hdr" style="left:286px;top:87px;width:736px;height:21px;padding-left:18px">Graphic</div>
<div class="a" style="left:286px;top:108px;width:736px;height:30px;background:#fff"></div>
<div class="a" style="left:286px;top:138px;width:736px;height:343px;background:#f0ecf7"></div>
<div class="a" style="left:286px;top:481px;width:736px;height:6px;background:#e6e6e6"></div>

<!-- graphic toolbar -->
<div class="grp" style="left:288px;top:111px;width:28px;height:25px"></div>
<div class="grp" style="left:319px;top:111px;width:53px;height:25px"></div>
<div class="a" style="left:346px;top:111px;width:26px;height:25px;background:#bc0c1c;border-right:2px solid #7a0a10;border-bottom:2px solid #7a0a10"></div>
<div class="grp" style="left:375px;top:111px;width:80px;height:25px"></div>
<div class="grp" style="left:458px;top:111px;width:104px;height:25px"></div>
<div class="grp" style="left:567px;top:111px;width:53px;height:25px"></div>
<div class="a" style="left:567px;top:111px;width:26px;height:25px;background:#bc0c1c;border-right:2px solid #7a0a10;border-bottom:2px solid #7a0a10"></div>
<div class="a" style="left:885px;top:111px;width:51px;height:24.5px;background:#c00818;border-right:2px solid #7a0a10;border-bottom:2px solid #7a0a10"></div>
<div class="grp" style="left:942px;top:111px;width:77px;height:25px"></div>
<div class="a" style="left:993px;top:111px;width:26px;height:25px;background:#bc0c1c;border-right:2px solid #7a0a10;border-bottom:2px solid #7a0a10"></div>
<svg class="a" style="left:0;top:0" width="1024" height="718" viewBox="0 0 1024 718">
 <g fill="none" stroke="#4a4a4a">
  <!-- restart -->
  <path d="M296 117.5 A6.8 6.8 0 1 0 301.5 115.7" stroke-width="2.8"/>
  <path d="M292.5 115.5 L299.5 116 L296 122 Z" fill="#4a4a4a" stroke="none"/>
  <!-- line chart inactive -->
  <path d="M321.3 126.7 L326.5 122.1 L330 124.3 L333.3 120.3 L337.7 124.7 L341.8 119.4" stroke="#5a5a5a" stroke-width="1.4"/>
  <g fill="#5a5a5a" stroke="none"><circle cx="326.5" cy="122.1" r="1.2"/><circle cx="333.3" cy="120.3" r="1.2"/><circle cx="337.7" cy="124.7" r="1.2"/><circle cx="341.8" cy="119.4" r="1.2"/></g>
  <!-- line chart active -->
  <path d="M346.5 127.3 L351.1 123.2 L354.7 124.4 L359.4 120.6 L364.6 125.6 L369.3 120.3" stroke="#fff" stroke-width="1.5"/>
  <path d="M347.6 113.5 V130.8 H371" stroke="#f4a0a0" stroke-width="1"/>
  <!-- zoom in -->
  <circle cx="392.5" cy="119.9" r="5.6" stroke-width="1.9"/><path d="M388.3 124.3 L381 130.3" stroke-width="2.8"/><path d="M389.4 119.9 H395.6 M392.5 116.8 V123" stroke-width="1.6"/>
  <circle cx="417.9" cy="119.9" r="5.6" stroke-width="1.9"/><path d="M413.7 124.3 L406.4 130.3" stroke-width="2.8"/><path d="M414.9 119.9 H420.9" stroke-width="1.6"/>
  <circle cx="443.7" cy="119.9" r="5.6" stroke-width="1.9"/><path d="M439.5 124.3 L432.2 130.3" stroke-width="2.8"/><rect x="441.4" y="117.6" width="4.6" height="4.6" fill="#4a4a4a" stroke="none"/>
  <!-- cross -->
  <path d="M462 124 H481.4 M471.7 114.7 V131.4" stroke-width="1.6"/>
  <!-- arrow -->
  <path d="M491 114.7 L491 128.5 L494.8 125.3 L497.8 130.8 L500.2 129.6 L497.4 124.4 L503 124 Z" fill="#4a4a4a" stroke="none"/>
  <!-- hand -->
  <path d="M519.3 129.5 L515.6 123.8 Q514.8 122.4 516.2 122 L518.6 123.8 V115.8 Q520.5 114 522.2 115.8 V120 H526.8 Q529 120.4 529 122.4 V127.5 L527.6 130.8 H520.6 Z" fill="#4a4a4a" stroke="none"/>
  <!-- pin -->
  <path d="M538.7 113.6 H558 V128 L554 131.9 H538.7 Z" stroke-width="1.3"/>
  <path d="M554 131.9 V128 H558 Z" fill="#4a4a4a" stroke="none"/>
  <g transform="translate(551,120.6) rotate(45)" stroke="none" fill="#4a4a4a">
   <rect x="-3" y="-5.5" width="6" height="2"/><path d="M-1.8 -3.5 H1.8 L2.6 1 H-2.6 Z"/><rect x="-4" y="0.8" width="8" height="1.6"/>
   <rect x="-0.5" y="2.4" width="1" height="7"/>
  </g>
  <!-- xy -->
  <rect x="571" y="114" width="19" height="18" stroke="#f4b0b0" stroke-width="1.3"/><rect x="571" y="114" width="19" height="4" fill="#fff" stroke="none"/>
  <!-- bar chart -->
  <rect x="597" y="114" width="19" height="4" fill="#4a4a4a" stroke="none"/><path d="M597 118 V131 H616 V118" stroke="#8a8a8a" stroke-width="1"/><path d="M600 124 V131 M605 127 V131 M611 122 V131" stroke-width="2.5"/>
  <!-- two panels -->
  <rect x="888.4" y="118.5" width="6.8" height="13.5" fill="#fff4f4" stroke="none"/>
  <rect x="888.4" y="114.4" width="6.8" height="17.6" stroke="#f8a8a8" stroke-width="1"/><rect x="895.7" y="114.4" width="11.6" height="17.6" stroke="#f8a8a8" stroke-width="1"/>
  <rect x="914.2" y="114.4" width="6.8" height="4.2" fill="#fff4f4" stroke="none"/>
  <rect x="914.2" y="114.4" width="6.8" height="17.6" stroke="#f8a8a8" stroke-width="1"/><rect x="921.5" y="114.4" width="11.4" height="17.6" stroke="#f8a8a8" stroke-width="1"/>
  <!-- list -->
  <path d="M945 115.4 H947.3 M948.3 115.4 H963.8 M945 118.9 H947.3 M948.3 118.9 H963.8 M945 122.7 H947.3 M948.3 122.7 H963.8 M945 126.4 H947.3 M948.3 126.4 H963.8 M945 130.1 H947.3 M948.3 130.1 H963.8" stroke-width="1.7"/>
  <path d="M971.2 128.5 L978.6 120.3 L980.2 124 L984.7 116.2 L987.2 125.6 L990 115" stroke-width="1.6"/>
  <path d="M996.6 121.5 L1002.3 117.8 L1005.6 119.1 L1009.7 116.2 L1012.2 118.3 L1015 115.4" stroke="#fff" stroke-width="1.4"/><path d="M996.6 124.4 H1015.4 M996.6 127.4 H1015.4 M996.6 130.3 H1015.4" stroke="#fde0e0" stroke-width="1.2"/>
 </g>
 <text x="580.5" y="128" font-family="Liberation Sans" font-size="7" font-weight="bold" fill="#fff" text-anchor="middle">x y</text>
</svg>

<!-- chart -->
<svg class="a" style="left:0;top:0" width="1024" height="718" viewBox="0 0 1024 718">
 <rect x="292" y="142" width="36" height="33" fill="#f20000"/>
 <text x="309.7" y="164" font-family="Liberation Sans" font-size="15" font-weight="bold" fill="#fff0f0" text-anchor="middle">°C</text>
 <rect x="981" y="142.3" width="35.7" height="33" fill="#0a820a"/>
 <text x="999.3" y="162.4" font-family="Liberation Sans" font-size="10.2" font-weight="bold" fill="#d8ffd8" text-anchor="middle">%RH</text>
 <rect x="289" y="182" width="43" height="265.5" fill="#ebeced"/>
 <rect x="977" y="182" width="43" height="264" fill="#ebeced"/>
 <g fill="#d8d5da" stroke="#a0a0a4" stroke-width="1" stroke-dasharray="1.5 1.5">
  <rect x="345.5" y="183.5" width="84" height="262"/>
  <rect x="512.5" y="183.5" width="84" height="262"/>
  <rect x="679.5" y="183.5" width="84" height="262"/>
  <rect x="846.5" y="183.5" width="84" height="262" stroke="none"/><path d="M846.5 445.5 V183.5 H930.5" fill="none"/>
 </g>
 <g stroke="#111" stroke-width="1.2" fill="none">
  <path d="M288.5 183 V445.5" stroke-width="1" stroke="#1a1a1a"/>
  <path d="M331.5 183 V445.5 H977.5 V183"/>
  <path d="M1020 183 V445"/>
  <path d="M345.5 445 V449 M429.5 445 V449 M512.5 445 V449 M596.5 445 V449 M679.5 445 V449 M763.5 445 V449 M846.5 445 V449 M331.5 445 V449 M977.5 445 V449"/>
 </g>
 <g font-family="Liberation Sans" font-size="8" letter-spacing="0.45" fill="#1e1e1e" stroke="#1e1e1e" stroke-width="0.25" text-anchor="end">
  <text x="322" y="185.7">28,00</text><text x="322" y="202.1">27,50</text><text x="322" y="218.5">27,00</text><text x="322" y="234.9">26,50</text>
  <text x="322" y="251.3">26,00</text><text x="322" y="267.7">25,50</text><text x="322" y="284.1">25,00</text><text x="322" y="300.5">24,50</text>
  <text x="322" y="316.9">24,00</text><text x="322" y="333.3">23,50</text><text x="322" y="349.7">23,00</text><text x="322" y="366.1">22,50</text>
  <text x="322" y="382.5">22,00</text><text x="322" y="398.9">21,50</text><text x="322" y="415.3">21,00</text><text x="322" y="431.7">20,50</text>
  <text x="322" y="448.1">20,00</text>
 </g>
 <g font-family="Liberation Sans" font-size="8" letter-spacing="0.45" fill="#1e1e1e" stroke="#1e1e1e" stroke-width="0.25" text-anchor="middle">
  <text x="999.3" y="201.7">45,00</text><text x="999.3" y="229.0">40,00</text><text x="999.3" y="256.3">35,00</text><text x="999.3" y="283.7">30,00</text>
  <text x="999.3" y="311.0">25,00</text><text x="999.3" y="338.3">20,00</text><text x="999.3" y="365.7">15,00</text><text x="999.3" y="393.0">10,00</text>
  <text x="999.3" y="420.3">5,00</text><text x="999.3" y="447.7">0,00</text>
 </g>
 <g font-family="Liberation Sans" font-size="8.4" letter-spacing="0.15" fill="#454545">
  <text x="407" y="456">10/12/2015</text><text x="407" y="464.8">00:00:00</text>
  <text x="491" y="456">10/12/2015</text><text x="491" y="464.8">06:00:00</text>
  <text x="574" y="456">10/12/2015</text><text x="574" y="464.8">12:00:00</text>
  <text x="658" y="456">10/12/2015</text><text x="658" y="464.8">18:00:00</text>
  <text x="741" y="456">11/12/2015</text><text x="741" y="464.8">00:00:00</text>
  <text x="825" y="456">11/12/2015</text><text x="825" y="464.8">06:00:00</text>
   </g>
 <g font-family="Liberation Sans" font-size="8.4" font-weight="bold" letter-spacing="0.55" fill="#1a1a1a">
  <text x="309" y="457">09/12/2015</text><text x="309" y="466">17:04:09</text>
  <text x="954" y="457">11/12/2015</text><text x="954" y="466">15:20:09</text>
 </g>
 <rect x="292" y="471" width="36" height="7" fill="#f00000"/>
 <rect x="981" y="471" width="36" height="7" fill="#0a820a"/>
 <g fill="none" stroke-width="1.2" stroke-linejoin="miter">
  <polyline points="332.0,242.0 332.1,243.0 332.1,244.0 332.1,245.0 332.2,246.0 332.2,247.0 332.3,248.0 332.4,249.0 332.4,250.0 332.4,251.0 332.5,252.0 332.6,253.0 332.6,254.0 332.6,255.0 332.7,256.0 332.8,257.0 332.8,258.0 332.9,259.0 332.9,260.0 332.9,261.0 333.0,262.0 333.1,263.0 333.2,264.0 333.4,265.0 333.5,266.0 333.6,267.0 333.8,268.0 333.9,269.0 334.0,270.0 334.2,269.0 334.5,268.0 334.8,267.0 335.0,266.0 335.2,265.0 335.5,264.0 335.8,263.0 336.0,262.0 336.2,263.0 336.4,264.0 336.6,265.0 336.8,266.0 337.0,267.0 337.2,268.0 337.4,269.0 337.6,270.0 337.8,271.0 338.0,272.0 338.2,271.0 338.4,270.0 338.6,269.0 338.8,268.0 339.0,267.0 339.2,266.0 339.4,265.0 339.6,264.0 339.8,263.0 340.0,262.0 340.0,261.0 340.0,260.0 340.0,259.0 340.1,258.0 340.1,257.0 340.1,256.0 340.1,255.0 340.1,254.0 340.1,253.0 340.1,252.0 340.2,251.0 340.2,250.0 340.2,249.0 340.2,248.0 340.2,247.0 340.2,246.0 340.2,245.0 340.2,244.0 340.3,243.0 340.3,242.0 340.3,241.0 340.3,240.0 340.3,239.0 340.3,238.0 340.3,237.0 340.4,236.0 340.4,235.0 340.4,234.0 340.4,233.0 340.4,232.0 340.4,231.0 340.4,230.0 340.5,229.0 340.5,228.0 340.5,227.0 340.5,226.0 340.5,225.0 340.5,224.0 340.5,223.0 340.6,222.0 340.6,221.0 340.6,220.0 340.6,219.0 340.6,218.0 340.6,217.0 340.6,216.0 340.7,215.0 340.7,214.0 340.7,213.0 340.7,212.0 340.7,211.0 340.7,210.0 340.7,209.0 340.8,208.0 340.8,207.0 340.8,206.0 340.8,205.0 340.8,204.0 340.8,203.0 340.8,202.0 340.8,201.0 340.9,200.0 340.9,199.0 340.9,198.0 340.9,197.0 340.9,196.0 340.9,195.0 340.9,194.0 341.0,193.0 341.0,192.0 341.0,191.0 341.0,190.0 341.0,191.0 341.0,192.0 341.0,193.0 341.1,194.0 341.1,195.0 341.1,196.0 341.1,197.0 341.1,198.0 341.1,199.0 341.1,200.0 341.1,201.0 341.2,202.0 341.2,203.0 341.2,204.0 341.2,205.0 341.2,206.0 341.2,207.0 341.2,208.0 341.2,209.0 341.3,210.0 341.3,211.0 341.3,212.0 341.3,213.0 341.3,214.0 341.3,215.0 341.3,216.0 341.3,217.0 341.4,218.0 341.4,219.0 341.4,220.0 341.4,221.0 341.4,222.0 341.4,223.0 341.4,224.0 341.4,225.0 341.5,226.0 341.5,227.0 341.5,228.0 341.5,229.0 341.5,230.0 341.5,231.0 341.5,232.0 341.6,233.0 341.6,234.0 341.6,235.0 341.6,236.0 341.6,237.0 341.6,238.0 341.6,239.0 341.6,240.0 341.7,241.0 341.7,242.0 341.7,243.0 341.7,244.0 341.7,245.0 341.7,246.0 341.7,247.0 341.7,248.0 341.8,249.0 341.8,250.0 341.8,251.0 341.8,252.0 341.8,253.0 341.8,254.0 341.8,255.0 341.8,256.0 341.9,257.0 341.9,258.0 341.9,259.0 341.9,260.0 341.9,261.0 341.9,262.0 341.9,263.0 341.9,264.0 342.0,265.0 342.0,266.0 342.0,267.0 342.0,268.0 342.1,267.0 342.2,266.0 342.3,265.0 342.4,264.0 342.6,263.0 342.7,262.0 342.8,261.0 342.9,260.0 343.0,259.0 343.1,258.0 343.2,257.0 343.3,256.0 343.4,255.0 343.6,254.0 343.7,253.0 343.8,252.0 343.9,251.0 344.0,250.0 345.0,249.5 346.0,247.7 347.0,246.8 348.0,248.5 349.0,247.0 350.0,246.1 351.0,246.9 352.0,245.4 353.0,246.3 354.0,246.0 355.0,244.3 356.0,245.0 357.0,245.7 358.0,246.2 359.0,247.6 360.0,247.4 361.0,247.0 362.0,245.5 363.0,246.6 364.0,244.4 365.0,243.9 366.0,244.2 367.0,245.0 368.0,243.8 369.0,245.0 370.0,244.0 371.0,244.1 372.0,244.1 373.0,243.5 374.0,245.4 375.0,245.5 376.0,245.8 377.0,246.7 378.0,244.2 379.0,243.9 380.0,243.6 381.0,243.1 382.0,242.6 383.0,243.0 384.0,243.1 385.0,243.7 386.0,242.1 387.0,243.4 388.0,242.7 389.0,242.8 390.0,244.2 391.0,243.6 392.0,243.9 393.0,244.4 394.0,244.9 395.0,243.9 396.0,244.5 397.0,244.4 398.0,244.6 399.0,245.3 400.0,244.9 401.0,245.3 402.0,245.3 403.0,246.7 404.0,246.3 405.0,246.9 406.0,247.3 407.0,245.8 408.0,246.7 409.0,247.9 410.0,247.8 411.0,246.3 412.0,246.5 413.0,247.5 414.0,246.7 415.0,247.4 416.0,247.1 417.0,248.8 418.0,249.3 419.0,249.8 420.0,248.1 421.0,249.7 422.0,249.8 423.0,248.7 424.0,250.8 425.0,251.2 426.0,249.7 427.0,251.9 428.0,250.9 429.0,251.6 430.0,253.2 431.0,253.1 432.0,251.8 433.0,252.7 434.0,253.2 435.0,253.1 436.0,253.0 437.0,253.6 438.0,255.0 439.0,253.5 440.0,255.1 441.0,255.2 442.0,254.4 443.0,255.5 444.0,256.5 445.0,256.5 446.0,255.7 447.0,258.3 448.0,258.1 449.0,258.9 450.0,257.0 451.0,257.7 452.0,257.4 453.0,259.6 454.0,258.6 455.0,258.6 456.0,259.6 457.0,261.1 458.0,261.2 459.0,260.1 460.0,260.1 461.0,262.4 462.0,262.0 463.0,262.7 464.0,261.6 465.0,261.9 466.0,263.9 467.0,263.6 468.0,263.1 469.0,265.7 470.0,265.3 471.0,266.3 472.0,265.0 473.0,267.4 474.0,265.9 475.0,268.4 476.0,267.9 477.0,268.1 478.0,269.1 479.0,270.6 480.0,269.4 481.0,269.4 482.0,270.7 483.0,270.2 484.0,270.2 485.0,270.7 486.0,270.7 487.0,271.4 488.0,271.9 489.0,272.2 490.0,273.6 491.0,273.1 492.0,274.2 493.0,274.0 494.0,275.0 495.0,274.8 496.0,276.0 497.0,276.0 498.0,278.4 499.0,278.5 500.0,278.2 501.0,279.2 502.0,280.7 503.0,278.9 504.0,281.0 505.0,280.3 506.0,280.8 507.0,281.9 508.0,281.1 509.0,281.7 510.0,282.5 511.0,283.4 512.0,282.0 513.0,283.4 514.0,283.3 515.0,283.3 516.0,283.0 517.0,283.0 518.0,282.5 519.0,282.9 520.0,282.9 521.0,285.0 522.0,284.1 523.0,284.3 524.0,284.5 525.0,286.7 526.0,287.2 527.0,287.1 528.0,286.5 528.3,284.9 528.6,284.1 528.9,283.8 529.1,281.5 529.4,281.8 529.7,280.0 530.0,282.0 530.2,283.1 530.5,282.2 530.8,281.9 531.0,286.0 531.2,284.2 531.5,285.4 531.8,284.8 532.0,287.5 532.2,288.9 532.5,290.0 532.8,289.7 533.0,292.0 533.4,288.8 533.9,289.0 534.3,287.2 534.7,287.6 535.1,285.0 535.6,283.9 536.0,284.1 536.2,284.8 536.4,287.4 536.5,288.1 536.7,290.1 536.9,290.7 537.1,292.0 537.3,293.7 537.5,292.5 537.6,293.2 537.8,297.1 538.0,294.5 538.2,296.0 538.5,294.6 538.8,291.0 539.0,293.5 539.2,292.7 539.5,290.6 539.8,290.0 540.0,289.4 540.2,287.4 540.3,290.1 540.5,291.0 540.7,293.5 540.8,294.3 541.0,295.4 541.2,295.4 541.3,297.7 541.5,297.8 541.7,298.9 541.8,297.8 542.0,297.9 542.5,297.4 543.0,297.4 543.5,295.3 544.0,297.5 544.5,295.3 545.0,294.6 545.4,295.6 545.8,296.8 546.1,297.0 546.5,295.8 546.9,300.3 547.2,301.1 547.6,301.0 548.0,302.2 549.0,301.7 550.0,298.1 551.0,300.0 552.0,296.9 552.8,297.1 553.6,299.0 554.4,302.0 555.2,300.7 556.0,304.1 557.0,305.1 558.0,303.0 559.0,302.5 560.0,302.9 561.0,303.9 562.0,304.5 563.0,304.5 564.0,305.0 565.0,303.9 566.0,304.3 567.0,304.8 568.0,306.2 569.0,305.3 570.0,306.2 571.0,304.8 572.0,304.9 573.0,305.4 574.0,306.4 575.0,306.5 576.0,306.4 577.0,305.5 578.0,306.0 579.0,305.9 580.0,305.9 581.0,304.8 582.0,306.6 583.0,304.6 584.0,306.4 585.0,306.1 585.6,303.6 586.2,303.0 586.9,302.3 587.5,301.4 588.1,300.0 588.8,298.8 589.4,297.8 590.0,297.4 590.3,295.8 590.7,295.1 591.0,293.7 591.3,293.0 591.7,292.4 592.0,290.7 592.3,290.3 592.7,289.0 593.0,288.3 593.1,287.2 593.1,285.8 593.2,285.3 593.3,284.0 593.4,282.6 593.4,281.6 593.5,281.0 593.6,280.0 593.7,278.8 593.7,277.7 593.8,276.9 593.9,275.9 594.0,275.3 594.0,273.6 594.1,273.2 594.2,272.3 594.2,270.7 594.3,270.3 594.4,269.2 594.5,268.3 594.5,266.8 594.6,265.9 594.7,264.9 594.8,264.4 594.8,263.1 594.9,261.9 595.0,260.9 595.1,259.8 595.1,258.6 595.2,257.7 595.3,257.3 595.4,255.8 595.4,255.3 595.5,253.8 595.5,254.8 595.6,256.0 595.6,256.8 595.7,257.9 595.7,259.4 595.8,260.3 595.8,261.2 595.8,262.1 595.9,263.3 595.9,264.4 596.0,265.0 596.0,266.2 596.0,266.6 596.1,268.2 596.1,269.0 596.2,270.2 596.2,271.1 596.2,271.8 596.3,272.6 596.3,274.3 596.4,274.7 596.4,276.0 596.5,276.9 596.5,277.8 596.5,279.2 596.6,280.4 596.6,280.8 596.7,282.1 596.7,282.8 596.8,284.0 596.8,284.9 596.8,285.7 596.9,286.7 596.9,287.8 597.0,289.3 597.0,290.0 597.8,290.8 598.7,292.3 599.5,293.4 600.5,292.6 601.6,291.9 602.6,291.6 603.7,291.1 604.8,290.9 605.8,290.3 606.9,290.0 607.9,289.6 609.0,289.5 610.0,289.3 610.5,288.2 611.1,286.9 611.6,285.9 612.2,285.0 612.7,283.9 613.2,282.9 613.8,281.6 614.3,280.8 614.8,280.4 615.4,278.7 615.9,278.0 616.5,277.1 617.0,276.3 618.0,276.2 619.0,276.6 620.0,277.0 621.0,277.5 622.0,278.0 623.0,278.4 624.0,278.3 625.0,278.3 626.0,277.6 627.0,277.6 627.0,277.1 627.1,276.3 627.1,274.9 627.1,274.0 627.2,272.5 627.2,271.8 627.2,271.2 627.3,270.1 627.3,269.1 627.4,268.1 627.4,266.5 627.4,265.4 627.5,264.4 627.5,263.7 627.5,262.8 627.6,262.0 627.6,260.8 627.6,259.7 627.7,258.7 627.7,257.5 627.8,258.6 627.8,259.2 627.9,260.8 628.0,261.4 628.0,263.0 628.1,263.8 628.2,264.5 628.2,265.4 628.3,266.5 628.4,267.9 628.4,268.9 628.5,269.5 628.5,270.5 628.6,271.9 628.7,272.9 628.7,273.8 628.8,274.7 628.9,276.0 628.9,276.6 629.0,277.8 630.0,278.1 631.0,278.5 632.0,278.4 633.0,278.7 634.0,278.4 635.0,278.3 636.0,278.4 637.0,279.1 638.0,279.0 639.0,278.8 640.0,278.6 641.0,279.1 642.0,279.3 643.0,279.2 644.0,279.2 645.0,279.6 646.0,279.9 647.0,279.5 648.0,279.4 649.0,279.8 650.0,279.9 651.0,279.4 652.0,278.3 653.0,278.0 654.0,277.2 654.1,276.0 654.1,274.8 654.2,274.4 654.2,272.8 654.3,272.3 654.4,270.8 654.4,269.8 654.5,269.2 654.5,267.8 654.6,267.4 654.6,266.0 654.7,264.7 654.8,263.8 654.8,262.9 654.9,262.1 654.9,261.4 655.0,259.7 655.1,260.9 655.1,261.8 655.2,263.4 655.2,263.7 655.3,264.6 655.4,265.6 655.4,266.9 655.5,268.3 655.6,269.3 655.6,270.2 655.7,271.4 655.8,272.3 655.8,272.9 655.9,273.7 655.9,275.3 656.0,276.2" stroke="#1e7a1e" stroke-width="1.3"/>
  <polyline points="332.0,218.0 332.5,219.0 333.0,220.0 333.5,221.0 334.0,222.0 334.1,223.0 334.2,224.0 334.3,225.0 334.4,226.0 334.6,227.0 334.7,228.0 334.8,229.0 334.9,230.0 335.0,231.0 335.1,232.0 335.2,233.0 335.3,234.0 335.4,235.0 335.6,236.0 335.7,237.0 335.8,238.0 335.9,239.0 336.0,240.0 336.1,241.0 336.2,242.0 336.2,243.0 336.3,244.0 336.4,245.0 336.5,246.0 336.6,247.0 336.6,248.0 336.7,249.0 336.8,250.0 336.9,251.0 337.0,252.0 337.0,253.0 337.1,254.0 337.2,255.0 337.3,256.0 337.4,257.0 337.4,258.0 337.5,259.0 337.6,260.0 337.7,261.0 337.8,262.0 337.8,263.0 337.9,264.0 338.0,265.0 338.1,266.0 338.2,267.0 338.4,268.0 338.5,269.0 338.6,270.0 338.7,271.0 338.8,272.0 339.0,273.0 339.1,274.0 339.2,275.0 339.3,276.0 339.4,277.0 339.6,278.0 339.7,279.0 339.8,280.0 339.9,281.0 340.0,282.0 340.2,283.0 340.3,284.0 340.4,285.0 340.5,286.0 340.6,287.0 340.8,288.0 340.9,289.0 341.0,290.0 341.2,291.0 341.3,292.0 341.5,293.0 341.6,294.0 341.8,295.0 341.9,296.0 342.1,297.0 342.2,298.0 342.4,299.0 342.5,300.0 342.7,301.0 342.8,302.0 343.0,303.0 343.3,304.0 343.6,305.0 343.9,306.0 344.1,307.0 344.4,308.0 344.7,309.0 345.0,310.0 346.0,311.0 347.0,312.0 348.0,313.0 349.0,314.0 350.0,314.0 351.0,315.0 352.0,315.0 353.0,316.0 354.0,316.0 355.0,317.0 356.0,317.0 357.0,317.0 358.0,317.0 359.0,317.0 360.0,317.0 361.0,318.0 362.0,318.0 363.0,319.0 364.0,319.0 365.0,320.0 366.0,321.0 367.0,322.0 368.0,322.0 369.0,323.0 370.0,324.0 371.0,325.0 372.0,325.0 373.0,326.0 374.0,327.0 375.0,327.0 376.0,328.0 377.0,329.0 378.0,329.0 379.0,330.0 380.0,330.0 381.0,331.0 382.0,331.0 383.0,332.0 384.0,332.0 385.0,333.0 386.0,333.0 387.0,334.0 388.0,334.0 389.0,334.0 390.0,334.0 391.0,335.0 392.0,335.0 393.0,336.0 394.0,336.0 395.0,337.0 396.0,338.0 397.0,338.0 398.0,339.0 399.0,339.0 400.0,340.0 401.0,340.0 402.0,340.0 403.0,341.0 404.0,341.0 405.0,341.0 406.0,341.0 407.0,341.0 408.0,342.0 409.0,342.0 410.0,342.0 411.0,342.0 412.0,342.0 413.0,343.0 414.0,343.0 415.0,343.0 416.0,343.0 417.0,343.0 418.0,344.0 419.0,344.0 420.0,344.0 421.0,344.0 422.0,345.0 423.0,345.0 424.0,346.0 425.0,346.0 426.0,347.0 427.0,347.0 428.0,347.0 429.0,347.0 430.0,347.0 431.0,348.0 432.0,348.0 433.0,348.0 434.0,348.0 435.0,348.0 436.0,348.0 437.0,349.0 438.0,349.0 439.0,349.0 440.0,349.0 441.0,349.0 442.0,349.0 443.0,349.0 444.0,349.0 445.0,350.0 446.0,350.0 447.0,350.0 448.0,350.0 449.0,350.0 450.0,350.0 451.0,350.0 452.0,350.0 453.0,350.0 454.0,350.0 455.0,350.0 456.0,351.0 457.0,351.0 458.0,351.0 459.0,351.0 460.0,351.0 461.0,351.0 462.0,351.0 463.0,351.0 464.0,351.0 465.0,351.0 466.0,351.0 467.0,351.0 468.0,352.0 469.0,352.0 470.0,352.0 471.0,352.0 472.0,352.0 473.0,352.0 474.0,352.0 475.0,352.0 476.0,352.0 477.0,352.0 478.0,352.0 479.0,352.0 480.0,352.0 481.0,352.0 482.0,352.0 483.0,353.0 484.0,353.0 485.0,353.0 486.0,353.0 487.0,353.0 488.0,353.0 489.0,353.0 490.0,353.0 491.0,353.0 492.0,354.0 493.0,354.0 494.0,354.0 495.0,354.0 496.0,355.0 497.0,355.0 498.0,355.0 499.0,356.0 500.0,356.0 501.0,356.0 502.0,356.0 503.0,357.0 504.0,357.0 505.0,357.0 506.0,357.0 507.0,357.0 508.0,358.0 509.0,358.0 510.0,358.0 511.0,358.0 512.0,358.0 513.0,359.0 514.0,359.0 515.0,359.0 516.0,359.0 517.0,359.0 518.0,360.0 519.0,360.0 520.0,360.0 521.0,360.0 522.0,360.0 523.0,361.0 524.0,361.0 525.0,361.0 526.0,361.0 527.0,361.0 528.0,362.0 529.0,362.0 530.0,362.0 531.0,362.0 532.0,362.0 533.0,362.0 534.0,362.0 535.0,362.0 536.0,362.0 537.0,362.0 538.0,362.0 539.0,362.0 540.0,363.0 541.0,363.0 542.0,363.0 543.0,363.0 544.0,363.0 545.0,363.0 546.0,363.0 547.0,363.0 548.0,363.0 548.3,362.0 548.5,361.0 548.8,360.0 549.1,359.0 549.3,358.0 549.6,357.0 549.9,356.0 550.2,355.0 550.4,354.0 550.7,353.0 551.0,352.0 551.2,351.0 551.5,350.0 551.8,349.0 552.0,348.0 552.3,347.0 552.6,346.0 552.8,345.0 553.1,344.0 553.4,343.0 553.7,342.0 553.9,341.0 554.2,340.0 554.5,339.0 554.7,338.0 555.0,337.0 555.4,336.0 555.9,335.0 556.3,334.0 556.7,333.0 557.2,332.0 557.6,331.0 558.0,330.0 558.5,329.0 558.9,328.0 559.3,327.0 559.8,326.0 560.2,325.0 560.6,324.0 561.1,323.0 561.5,322.0 561.9,321.0 562.4,320.0 562.8,319.0 563.2,318.0 563.7,317.0 564.1,316.0 564.5,315.0 565.0,314.0 565.4,313.0 565.8,312.0 566.3,311.0 566.7,310.0 567.1,309.0 567.6,308.0 568.0,307.0 569.0,306.0 570.0,305.0 571.0,305.0 572.0,304.0 573.0,303.0 574.0,302.0 575.0,301.0 576.0,300.0 577.0,300.0 578.0,300.0 579.0,299.0 580.0,299.0 581.0,298.0 582.0,298.0 583.0,297.0 584.0,297.0 585.0,296.0 586.0,296.0 586.0,297.0 586.1,298.0 586.1,299.0 586.2,300.0 586.2,301.0 586.2,302.0 586.3,303.0 586.3,304.0 586.4,305.0 586.4,306.0 586.5,307.0 586.5,308.0 586.5,309.0 586.6,310.0 586.6,311.0 586.7,312.0 586.7,313.0 586.8,314.0 586.8,315.0 586.8,316.0 586.9,317.0 586.9,318.0 587.0,319.0 587.0,320.0 587.1,321.0 587.1,322.0 587.2,323.0 587.3,324.0 587.4,325.0 587.5,326.0 587.5,327.0 587.6,328.0 587.7,329.0 587.8,330.0 587.8,331.0 587.9,332.0 588.0,333.0 588.0,334.0 588.1,335.0 588.2,336.0 588.3,337.0 588.4,338.0 588.4,339.0 588.5,340.0 588.6,341.0 588.6,342.0 588.7,343.0 588.8,344.0 588.9,345.0 589.0,346.0 589.0,347.0 589.1,348.0 589.2,349.0 589.2,350.0 589.3,351.0 589.4,352.0 589.5,353.0 589.5,354.0 589.6,355.0 589.7,356.0 589.8,357.0 589.9,358.0 589.9,359.0 590.0,360.0 590.2,361.0 590.4,362.0 590.7,363.0 590.9,364.0 591.1,365.0 591.3,366.0 591.6,367.0 591.8,368.0 592.0,369.0 592.9,368.0 593.8,367.0 594.6,366.0 595.5,365.0 595.5,364.0 595.6,363.0 595.6,362.0 595.7,361.0 595.7,360.0 595.8,359.0 595.8,358.0 595.8,357.0 595.9,356.0 595.9,355.0 596.0,354.0 596.0,353.0 596.1,352.0 596.1,351.0 596.1,350.0 596.2,349.0 596.2,348.0 596.3,347.0 596.3,346.0 596.4,345.0 596.4,344.0 596.4,343.0 596.5,342.0 596.5,341.0 596.6,340.0 596.6,339.0 596.7,338.0 596.7,337.0 596.7,336.0 596.8,335.0 596.8,334.0 596.9,333.0 596.9,332.0 597.0,331.0 597.0,330.0 597.4,329.0 597.8,328.0 598.2,327.0 598.7,326.0 599.1,325.0 599.5,324.0 600.6,324.0 601.7,324.0 602.8,324.0 603.8,324.0 604.9,324.0 606.0,324.0 606.2,325.0 606.5,326.0 606.7,327.0 607.0,328.0 607.2,329.0 607.4,330.0 607.7,331.0 607.9,332.0 608.2,333.0 608.4,334.0 608.6,335.0 608.9,336.0 609.1,337.0 609.4,338.0 609.6,339.0 609.8,340.0 610.1,341.0 610.3,342.0 610.6,343.0 610.8,344.0 611.0,345.0 611.3,346.0 611.5,347.0 611.8,348.0 612.0,349.0 612.5,350.0 613.0,351.0 613.5,352.0 614.0,353.0 614.5,354.0 615.0,355.0 615.4,354.0 615.8,353.0 616.2,352.0 616.7,351.0 617.1,350.0 617.5,349.0 617.9,348.0 618.3,347.0 618.8,346.0 619.2,345.0 619.6,344.0 620.0,343.0 620.3,342.0 620.7,341.0 621.0,340.0 621.3,339.0 621.7,338.0 622.0,337.0 622.3,336.0 622.7,335.0 623.0,334.0 623.3,333.0 623.7,332.0 624.0,331.0 624.3,330.0 624.7,329.0 625.0,328.0 625.3,327.0 625.7,326.0 626.0,325.0 626.3,324.0 626.7,323.0 627.0,322.0 627.5,321.0 628.0,320.0 628.5,319.0 629.0,318.0 629.5,317.0 630.0,316.0 630.5,315.0 631.0,314.0 631.5,313.0 632.0,312.0 632.5,311.0 633.0,310.0 633.5,309.0 634.0,308.0 634.5,307.0 635.0,306.0 635.5,305.0 636.0,304.0 636.5,303.0 637.0,302.0 637.5,301.0 638.0,300.0 638.5,298.0 639.6,299.0 640.6,299.0 641.7,299.0 642.7,299.0 643.8,300.0 644.8,300.0 645.9,300.0 646.9,300.0 648.0,300.0 648.3,302.0 648.7,303.0 649.0,304.0 649.3,305.0 649.7,306.0 650.0,307.0 650.3,308.0 650.7,309.0 651.0,310.0 651.4,309.0 651.9,308.0 652.3,307.0 652.8,306.0 653.2,305.0 653.7,304.0 654.1,303.0 654.6,302.0 655.0,301.0" stroke="#3838d8"/>
  <polyline points="332.0,183.0 332.2,184.0 332.4,185.0 332.7,186.0 332.9,187.0 333.1,188.0 333.3,189.0 333.6,190.0 333.8,191.0 334.0,192.0 334.1,193.0 334.2,194.0 334.3,195.0 334.3,196.0 334.4,197.0 334.5,198.0 334.6,199.0 334.7,200.0 334.8,201.0 334.9,202.0 335.0,203.0 335.0,204.0 335.1,205.0 335.2,206.0 335.3,207.0 335.4,208.0 335.5,209.0 335.6,210.0 335.7,211.0 335.7,212.0 335.8,213.0 335.9,214.0 336.0,215.0 336.1,216.0 336.2,217.0 336.2,218.0 336.3,219.0 336.4,220.0 336.5,221.0 336.6,222.0 336.6,223.0 336.7,224.0 336.8,225.0 336.9,226.0 337.0,227.0 337.0,228.0 337.1,229.0 337.2,230.0 337.3,231.0 337.4,232.0 337.4,233.0 337.5,234.0 337.6,235.0 337.7,236.0 337.8,237.0 337.8,238.0 337.9,239.0 338.0,240.0 338.1,241.0 338.2,242.0 338.2,243.0 338.3,244.0 338.4,245.0 338.5,246.0 338.6,247.0 338.6,248.0 338.7,249.0 338.8,250.0 338.9,251.0 339.0,252.0 339.0,253.0 339.1,254.0 339.2,255.0 339.3,256.0 339.4,257.0 339.4,258.0 339.5,259.0 339.6,260.0 339.7,261.0 339.8,262.0 339.8,263.0 339.9,264.0 340.0,265.0 340.1,266.0 340.2,267.0 340.3,268.0 340.4,269.0 340.5,270.0 340.6,271.0 340.7,272.0 340.8,273.0 340.9,274.0 341.0,275.0 341.1,276.0 341.2,277.0 341.3,278.0 341.4,279.0 341.5,280.0 341.6,281.0 341.7,282.0 341.8,283.0 341.9,284.0 342.0,285.0 342.2,286.0 342.4,287.0 342.6,288.0 342.8,289.0 343.0,290.0 343.2,291.0 343.4,292.0 343.6,293.0 343.8,294.0 344.0,295.0 344.2,296.0 344.4,297.0 344.6,298.0 344.8,299.0 345.0,300.0 345.2,301.0 345.5,302.0 345.8,303.0 346.0,304.0 346.2,305.0 346.5,306.0 346.8,307.0 347.0,308.0 347.8,309.0 348.5,310.0 349.2,311.0 350.0,312.0 351.0,312.0 352.0,312.0 353.0,312.0 354.0,313.0 355.0,313.0 356.0,313.0 357.0,314.0 358.0,314.0 359.0,314.0 360.0,315.0 361.0,316.0 362.0,316.0 363.0,317.0 364.0,317.0 365.0,318.0 366.0,319.0 367.0,319.0 368.0,320.0 369.0,321.0 370.0,322.0 371.0,322.0 372.0,323.0 373.0,324.0 374.0,324.0 375.0,325.0 376.0,325.0 377.0,326.0 378.0,326.0 379.0,327.0 380.0,327.0 381.0,328.0 382.0,328.0 383.0,329.0 384.0,329.0 385.0,330.0 386.0,330.0 387.0,331.0 388.0,331.0 389.0,332.0 390.0,332.0 391.0,333.0 392.0,333.0 393.0,334.0 394.0,334.0 395.0,334.0 396.0,335.0 397.0,336.0 398.0,336.0 399.0,336.0 400.0,337.0 401.0,337.0 402.0,337.0 403.0,338.0 404.0,338.0 405.0,338.0 406.0,338.0 407.0,338.0 408.0,339.0 409.0,339.0 410.0,339.0 411.0,339.0 412.0,339.0 413.0,340.0 414.0,340.0 415.0,340.0 416.0,340.0 417.0,340.0 418.0,341.0 419.0,341.0 420.0,341.0 421.0,341.0 422.0,341.0 423.0,341.0 424.0,341.0 425.0,342.0 426.0,342.0 427.0,342.0 428.0,342.0 429.0,342.0 430.0,342.0 431.0,342.0 432.0,342.0 433.0,343.0 434.0,343.0 435.0,343.0 436.0,343.0 437.0,343.0 438.0,344.0 439.0,344.0 440.0,344.0 441.0,344.0 442.0,344.0 443.0,344.0 444.0,344.0 445.0,344.0 446.0,345.0 447.0,345.0 448.0,345.0 449.0,345.0 450.0,345.0 451.0,345.0 452.0,345.0 453.0,345.0 454.0,345.0 455.0,346.0 456.0,346.0 457.0,346.0 458.0,346.0 459.0,346.0 460.0,346.0 461.0,346.0 462.0,346.0 463.0,347.0 464.0,347.0 465.0,347.0 466.0,347.0 467.0,347.0 468.0,348.0 469.0,348.0 470.0,348.0 471.0,348.0 472.0,348.0 473.0,349.0 474.0,349.0 475.0,349.0 476.0,349.0 477.0,349.0 478.0,350.0 479.0,350.0 480.0,350.0 481.0,350.0 482.0,350.0 483.0,351.0 484.0,351.0 485.0,351.0 486.0,351.0 487.0,351.0 488.0,352.0 489.0,352.0 490.0,352.0 491.0,352.0 492.0,352.0 493.0,352.0 494.0,352.0 495.0,352.0 496.0,353.0 497.0,353.0 498.0,353.0 499.0,353.0 500.0,353.0 501.0,353.0 502.0,354.0 503.0,354.0 504.0,354.0 505.0,354.0 506.0,355.0 507.0,355.0 508.0,355.0 509.0,356.0 510.0,356.0 511.0,356.0 512.0,356.0 513.0,356.0 514.0,356.0 515.0,356.0 516.0,356.0 517.0,356.0 518.0,356.0 519.0,356.0 520.0,356.0 521.0,357.0 522.0,357.0 523.0,357.0 524.0,357.0 525.0,357.0 526.0,357.0 527.0,357.0 528.0,357.0 529.0,357.0 530.0,357.0 531.0,357.0 532.0,357.0 533.0,357.0 534.0,357.0 535.0,357.0 536.0,357.0 537.0,357.0 538.0,357.0 539.0,357.0 540.0,357.0 541.0,357.0 542.0,357.0 543.0,357.0 544.0,357.0 545.0,357.0 546.0,357.0 547.0,357.0 548.0,357.0 548.4,356.0 548.7,355.0 549.0,354.0 549.4,353.0 549.8,352.0 550.1,351.0 550.5,350.0 550.8,349.0 551.1,348.0 551.5,347.0 551.9,346.0 552.2,345.0 552.5,344.0 552.9,343.0 553.2,342.0 553.6,341.0 554.0,340.0 554.3,339.0 554.6,338.0 555.0,337.0 555.4,336.0 555.7,335.0 556.1,334.0 556.5,333.0 556.8,332.0 557.2,331.0 557.6,330.0 557.9,329.0 558.3,328.0 558.7,327.0 559.1,326.0 559.4,325.0 559.8,324.0 560.2,323.0 560.5,322.0 560.9,321.0 561.3,320.0 561.6,319.0 562.0,318.0 562.5,317.0 563.0,316.0 563.5,315.0 564.0,314.0 564.5,313.0 565.0,312.0 565.5,311.0 566.0,310.0 566.5,309.0 567.0,308.0 567.5,307.0 568.0,306.0 569.0,306.0 570.0,305.0 571.0,305.0 572.0,304.0 573.0,304.0 574.0,304.0 575.0,303.0 576.0,303.0 577.0,303.0 578.0,303.0 579.0,303.0 580.0,303.0 581.0,302.0 582.0,302.0 583.0,302.0 584.0,302.0 585.0,302.0 586.0,302.0 586.1,303.0 586.2,304.0 586.4,305.0 586.5,306.0 586.6,307.0 586.8,308.0 586.9,309.0 587.0,310.0 587.1,311.0 587.2,312.0 587.3,313.0 587.4,314.0 587.5,315.0 587.6,316.0 587.7,317.0 587.8,318.0 587.9,319.0 588.0,320.0 588.1,321.0 588.2,322.0 588.3,323.0 588.4,324.0 588.5,325.0 588.6,326.0 588.7,327.0 588.8,328.0 588.9,329.0 589.0,330.0 589.1,331.0 589.2,332.0 589.3,333.0 589.4,334.0 589.5,335.0 589.6,336.0 589.7,337.0 589.8,338.0 589.9,339.0 590.0,340.0 590.2,341.0 590.4,342.0 590.6,343.0 590.8,344.0 591.0,345.0 591.1,346.0 591.3,347.0 591.5,348.0 591.7,349.0 591.9,350.0 592.1,351.0 592.3,352.0 592.5,353.0 592.7,354.0 592.9,355.0 593.0,356.0 593.2,357.0 593.4,358.0 593.6,359.0 593.8,360.0 594.0,361.0 594.3,360.0 594.7,359.0 595.0,358.0 595.3,357.0 595.7,356.0 596.0,355.0 596.1,354.0 596.1,353.0 596.2,352.0 596.2,351.0 596.3,350.0 596.3,349.0 596.4,348.0 596.4,347.0 596.5,346.0 596.5,345.0 596.6,344.0 596.6,343.0 596.7,342.0 596.7,341.0 596.8,340.0 596.8,339.0 596.9,338.0 596.9,337.0 597.0,336.0 597.0,335.0 597.1,334.0 597.1,333.0 597.2,332.0 597.2,331.0 597.3,330.0 597.3,329.0 597.4,328.0 597.4,327.0 597.5,326.0 598.6,326.0 599.6,325.0 600.7,324.0 601.8,324.0 602.8,324.0 603.9,323.0 604.9,322.0 606.0,322.0 606.5,323.0 607.0,324.0 607.5,325.0 608.0,326.0 608.5,327.0 609.0,328.0 609.5,329.0 610.0,330.0 610.5,331.0 610.9,332.0 611.4,333.0 611.8,334.0 612.3,335.0 612.8,336.0 613.2,337.0 613.7,338.0 614.2,339.0 614.6,340.0 615.1,341.0 615.5,342.0 616.0,343.0 616.8,342.0 617.6,341.0 618.4,340.0 619.2,339.0 620.0,338.0 620.3,337.0 620.6,336.0 620.9,335.0 621.2,334.0 621.6,333.0 621.9,332.0 622.2,331.0 622.5,330.0 622.8,329.0 623.1,328.0 623.4,327.0 623.8,326.0 624.1,325.0 624.4,324.0 624.7,323.0 625.0,322.0 625.4,321.0 625.8,320.0 626.2,319.0 626.7,318.0 627.1,317.0 627.5,316.0 627.9,315.0 628.3,314.0 628.8,313.0 629.2,312.0 629.6,311.0 630.0,310.0 630.6,309.0 631.2,308.0 631.8,307.0 632.4,306.0 633.0,305.0 633.6,304.0 634.2,303.0 634.8,302.0 635.4,301.0 636.0,300.0 637.0,299.0 638.0,298.0 639.0,298.0 640.0,297.0 641.0,297.0 642.0,297.0 643.0,297.0 644.0,297.0 645.0,297.0 646.0,297.0 647.0,297.0 648.0,297.0 649.0,297.0 650.0,297.0 651.0,297.0 652.0,297.0 653.0,297.0 654.0,297.0 655.0,297.0 656.0,297.0 656.8,296.0 657.6,295.0 658.4,294.0 659.2,293.0 660.0,292.0 660.9,291.0 661.7,290.0 662.6,289.0 663.4,288.0 664.3,287.0 665.1,286.0 666.0,285.0 667.0,286.0 668.0,286.0 669.0,287.0 670.0,288.0 671.0,288.0 672.0,289.0 672.6,290.0 673.2,291.0 673.8,292.0 674.5,293.0 675.1,294.0 675.7,295.0 676.3,296.0 676.9,297.0 677.5,298.0 678.2,299.0 678.8,300.0 679.4,301.0 680.0,302.0 680.5,303.0 681.0,304.0 681.6,305.0 682.1,306.0 682.6,307.0 683.1,308.0 683.6,309.0 684.1,310.0 684.7,311.0 685.2,312.0 685.7,313.0 686.2,314.0 686.7,315.0 687.3,316.0 687.8,317.0 688.3,318.0 688.8,319.0 689.3,320.0 689.9,321.0 690.4,322.0 690.9,323.0 691.4,324.0 691.9,325.0 692.4,326.0 693.0,327.0 693.5,328.0 694.0,329.0 694.6,330.0 695.3,331.0 695.9,332.0 696.6,333.0 697.2,334.0 697.9,335.0 698.5,336.0 699.2,337.0 699.8,338.0 700.5,339.0 701.1,340.0 701.8,341.0 702.4,342.0 703.1,343.0 703.7,344.0 704.4,345.0 705.0,346.0 705.7,347.0 706.3,348.0 707.0,349.0 707.7,350.0 708.3,351.0 709.0,352.0 709.7,353.0 710.3,354.0 711.0,355.0 711.7,356.0 712.3,357.0 713.0,358.0 713.7,359.0 714.3,360.0 715.0,361.0 716.0,362.0 717.0,363.0 718.0,364.0 719.0,365.0 720.0,366.0 721.0,367.0 722.0,368.0 723.0,368.0 724.0,369.0 725.0,369.0 726.0,370.0 727.0,370.0 728.0,371.0 729.0,371.0 730.0,372.0 731.0,372.0 732.0,373.0 733.0,373.0 734.0,374.0 735.0,374.0 736.0,374.0 737.0,374.0 738.0,374.0 739.0,375.0 740.0,375.0 741.0,375.0 742.0,376.0 743.0,376.0 744.0,376.0 745.0,376.0 746.0,376.0 747.0,377.0 748.0,377.0 749.0,377.0 750.0,377.0 751.0,378.0 752.0,378.0 753.0,378.0 754.0,378.0 755.0,378.0 756.0,379.0 757.0,379.0 758.0,379.0 759.0,379.0 760.0,379.0 761.0,380.0 762.0,380.0 763.0,380.0 764.0,380.0 765.0,381.0 766.0,381.0 767.0,382.0 768.0,382.0 769.0,382.0 770.0,383.0 771.0,383.0 772.0,384.0 773.0,384.0 774.0,385.0 775.0,385.0 776.0,385.0 777.0,386.0 778.0,386.0 779.0,387.0 780.0,387.0 781.0,388.0 782.0,388.0 783.0,388.0 784.0,389.0 785.0,389.0 786.0,390.0 787.0,390.0 788.0,390.0 789.0,391.0 790.0,391.0 791.0,392.0 792.0,392.0 793.0,393.0 794.0,393.0 795.0,394.0 796.0,394.0 797.0,395.0 798.0,395.0 799.0,396.0 800.0,396.0 801.0,396.0 802.0,397.0 803.0,397.0 804.0,398.0 805.0,398.0 806.0,399.0 807.0,399.0 808.0,400.0 809.0,400.0 810.0,401.0 811.0,401.0 812.0,401.0 813.0,402.0 814.0,402.0 815.0,402.0 816.0,402.0 817.0,403.0 818.0,403.0 819.0,403.0 820.0,404.0 821.0,404.0 822.0,404.0 823.0,404.0 824.0,405.0 825.0,405.0 826.0,405.0 827.0,405.0 828.0,406.0 829.0,406.0 830.0,406.0 831.0,406.0 832.0,406.0 833.0,406.0 834.0,407.0 835.0,407.0 836.0,407.0 837.0,407.0 838.0,407.0 839.0,408.0 840.0,408.0 841.0,408.0 842.0,408.0 843.0,408.0 844.0,408.0 845.0,408.0 846.0,408.0 847.0,408.0 848.0,408.0 849.0,408.0 850.0,408.0 851.0,408.0 852.0,408.0 853.0,408.0 854.0,408.0 855.0,408.0 856.0,408.0 857.0,408.0 858.0,408.0 859.0,407.0 860.0,406.0 861.0,405.0 862.0,404.0 863.0,403.0 864.0,402.0 864.7,401.0 865.5,400.0 866.2,399.0 866.9,398.0 867.6,397.0 868.4,396.0 869.1,395.0 869.8,394.0 870.5,393.0 871.3,392.0 872.0,391.0 872.9,390.0 873.8,389.0 874.7,388.0 875.6,387.0 876.4,386.0 877.3,385.0 878.2,384.0 879.1,383.0 880.0,382.0 880.7,381.0 881.3,380.0 882.0,379.0 882.7,378.0 883.3,377.0 884.0,376.0 884.7,375.0 885.3,374.0 886.0,373.0 886.5,372.0 887.1,371.0 887.6,370.0 888.2,369.0 888.7,368.0 889.3,367.0 889.8,366.0 890.4,365.0 890.9,364.0 891.5,363.0 892.0,362.0 892.2,361.0 892.5,360.0 892.8,359.0 893.0,358.0 893.2,357.0 893.5,356.0 893.8,355.0 894.0,354.0 894.2,353.0 894.5,352.0 894.8,351.0 895.0,350.0 895.2,349.0 895.5,348.0 895.8,347.0 896.0,346.0 896.1,345.0 896.3,344.0 896.5,343.0 896.6,342.0 896.8,341.0 896.9,340.0 897.0,339.0 897.2,338.0 897.4,337.0 897.5,336.0 897.6,335.0 897.8,334.0 898.0,333.0 898.1,332.0 898.2,331.0 898.4,330.0 898.5,329.0 898.7,328.0 898.9,327.0 899.0,326.0 900.0,325.0 901.0,324.0 902.0,323.0 903.0,322.0 904.0,321.0 905.0,320.0 906.0,319.0 907.0,319.0 908.0,318.0 909.0,318.0 910.0,317.0 911.0,317.0 912.0,317.0 913.0,316.0 914.0,316.0 915.0,316.0 916.0,316.0 917.0,316.0 918.0,315.0 919.0,315.0 920.0,315.0 920.4,314.0 920.8,313.0 921.2,312.0 921.6,311.0 922.0,310.0 922.4,309.0 922.8,308.0 923.2,307.0 923.6,306.0 924.0,305.0 924.2,304.0 924.4,303.0 924.5,302.0 924.7,301.0 924.9,300.0 925.1,299.0 925.2,298.0 925.4,297.0 925.6,296.0 925.8,295.0 925.9,294.0 926.1,293.0 926.3,292.0 926.5,291.0 926.6,290.0 926.8,289.0 927.0,288.0 927.3,289.0 927.7,290.0 928.0,291.0 928.3,292.0 928.7,293.0 929.0,294.0 929.3,295.0 929.7,296.0 930.0,297.0 930.3,298.0 930.7,299.0 931.0,300.0 931.3,301.0 931.6,302.0 931.9,303.0 932.3,304.0 932.6,305.0 932.9,306.0 933.2,307.0 933.5,308.0 933.8,309.0 934.2,310.0 934.5,311.0 934.8,312.0 935.1,313.0 935.4,314.0 935.7,315.0 936.1,316.0 936.4,317.0 936.7,318.0 937.0,319.0 937.8,320.0 938.5,321.0 939.2,322.0 940.0,323.0 940.8,324.0 941.5,325.0 942.2,326.0 943.0,327.0 943.9,328.0 944.8,329.0 945.7,330.0 946.6,331.0 947.4,332.0 948.3,333.0 949.2,334.0 950.1,335.0 951.0,336.0 952.0,336.0 953.0,335.0 954.0,335.0 954.3,334.0 954.7,333.0 955.0,332.0 955.3,331.0 955.7,330.0 956.0,329.0 956.1,328.0 956.1,327.0 956.2,326.0 956.3,325.0 956.3,324.0 956.4,323.0 956.5,322.0 956.6,321.0 956.6,320.0 956.7,319.0 956.8,318.0 956.8,317.0 956.9,316.0 957.0,315.0 957.0,314.0 957.1,313.0 957.2,312.0 957.2,311.0 957.3,310.0 957.4,309.0 957.4,308.0 957.5,307.0 957.6,306.0 957.7,305.0 957.7,304.0 957.8,303.0 957.9,302.0 957.9,301.0 958.0,300.0 958.1,299.0 958.2,298.0 958.3,297.0 958.5,296.0 958.6,295.0 958.7,294.0 958.8,293.0 958.9,292.0 959.0,291.0 959.2,290.0 959.3,289.0 959.4,288.0 959.5,287.0 959.6,286.0 959.7,285.0 959.8,284.0 960.0,283.0 960.1,282.0 960.2,281.0 960.3,280.0 960.4,279.0 960.5,278.0 960.7,277.0 960.8,276.0 960.9,275.0 961.0,274.0 961.4,273.0 961.8,272.0 962.2,271.0 962.6,270.0 963.1,269.0 963.5,268.0 963.9,267.0 964.3,266.0 964.7,265.0 965.1,264.0 965.5,263.0 965.9,262.0 966.4,261.0 966.8,260.0 967.2,259.0 967.6,258.0 968.0,257.0 968.8,256.0 969.6,255.0 970.4,254.0 971.2,253.0 972.0,252.0 972.8,251.0 973.6,250.0 974.4,249.0 975.2,248.0 976.0,247.0 977.0,246.0" stroke="#f02030"/>
 </g>
 <g fill="#d80010"><rect x="352.0" y="311.0" width="4" height="2.5"/><rect x="376.0" y="325.0" width="2" height="2.5"/><rect x="382.0" y="328.0" width="3" height="2.5"/><rect x="388.0" y="331.0" width="3" height="2.5"/><rect x="400.0" y="336.0" width="2" height="2.5"/><rect x="406.0" y="337.0" width="3" height="2.5"/><rect x="418.0" y="340.0" width="2" height="2.5"/><rect x="430.0" y="341.0" width="4" height="2.5"/><rect x="442.0" y="343.0" width="3" height="2.5"/><rect x="466.0" y="346.0" width="4" height="2.5"/><rect x="478.0" y="349.0" width="2" height="2.5"/><rect x="496.0" y="352.0" width="2" height="2.5"/><rect x="514.0" y="355.0" width="3" height="2.5"/><rect x="520.0" y="356.0" width="4" height="2.5"/><rect x="526.0" y="356.0" width="4" height="2.5"/><rect x="538.0" y="356.0" width="3" height="2.5"/><rect x="544.0" y="356.0" width="4" height="2.5"/><rect x="556.6" y="329.0" width="2" height="2.5"/><rect x="558.8" y="323.0" width="4" height="2.5"/><rect x="567.0" y="305.0" width="3" height="2.5"/><rect x="605.0" y="321.0" width="3" height="2.5"/><rect x="608.0" y="327.0" width="4" height="2.5"/><rect x="610.8" y="333.0" width="4" height="2.5"/><rect x="620.2" y="333.0" width="3" height="2.5"/><rect x="632.6" y="303.0" width="2" height="2.5"/><rect x="637.0" y="297.0" width="2" height="2.5"/><rect x="659.9" y="290.0" width="3" height="2.5"/><rect x="674.7" y="294.0" width="2" height="2.5"/><rect x="678.4" y="300.0" width="3" height="2.5"/><rect x="687.8" y="318.0" width="2" height="2.5"/><rect x="690.9" y="324.0" width="3" height="2.5"/><rect x="714.0" y="360.0" width="3" height="2.5"/><rect x="720.0" y="366.0" width="4" height="2.5"/><rect x="726.0" y="369.0" width="3" height="2.5"/><rect x="738.0" y="374.0" width="2" height="2.5"/><rect x="744.0" y="375.0" width="2" height="2.5"/><rect x="750.0" y="377.0" width="4" height="2.5"/><rect x="756.0" y="378.0" width="2" height="2.5"/><rect x="762.0" y="379.0" width="2" height="2.5"/><rect x="774.0" y="384.0" width="2" height="2.5"/><rect x="792.0" y="392.0" width="3" height="2.5"/><rect x="804.0" y="397.0" width="3" height="2.5"/><rect x="816.0" y="402.0" width="3" height="2.5"/><rect x="822.0" y="403.0" width="2" height="2.5"/><rect x="828.0" y="405.0" width="4" height="2.5"/><rect x="834.0" y="406.0" width="2" height="2.5"/><rect x="840.0" y="407.0" width="2" height="2.5"/><rect x="846.0" y="407.0" width="3" height="2.5"/><rect x="863.7" y="400.0" width="4" height="2.5"/><rect x="878.1" y="382.0" width="3" height="2.5"/><rect x="882.3" y="376.0" width="2" height="2.5"/><rect x="886.1" y="370.0" width="3" height="2.5"/><rect x="889.4" y="364.0" width="4" height="2.5"/><rect x="893.2" y="352.0" width="2" height="2.5"/><rect x="895.8" y="340.0" width="3" height="2.5"/><rect x="896.6" y="334.0" width="3" height="2.5"/><rect x="897.5" y="328.0" width="2" height="2.5"/><rect x="913.0" y="315.0" width="2" height="2.5"/><rect x="923.4" y="302.0" width="4" height="2.5"/><rect x="924.4" y="296.0" width="2" height="2.5"/><rect x="925.5" y="290.0" width="3" height="2.5"/><rect x="927.0" y="290.0" width="3" height="2.5"/><rect x="930.9" y="302.0" width="2" height="2.5"/><rect x="932.8" y="308.0" width="4" height="2.5"/><rect x="937.5" y="320.0" width="2" height="2.5"/><rect x="953.0" y="334.0" width="2" height="2.5"/><rect x="955.0" y="328.0" width="3" height="2.5"/><rect x="955.4" y="322.0" width="2" height="2.5"/><rect x="955.8" y="316.0" width="2" height="2.5"/><rect x="956.2" y="310.0" width="2" height="2.5"/><rect x="956.7" y="304.0" width="3" height="2.5"/><rect x="957.8" y="292.0" width="2" height="2.5"/><rect x="958.5" y="286.0" width="2" height="2.5"/></g>
</svg>

<!-- TABLE PANEL -->
<div class="hdr" style="left:286px;top:487px;width:736px;height:21px;padding-left:18px">Table</div>
<div class="a" style="left:286px;top:508px;width:736px;height:210px;background:#fff"></div>
<div class="a" style="left:1008px;top:508px;width:14px;height:208px;background:linear-gradient(90deg,#d6d6d6 0,#e8e8e8 3px,#f2f2f2 8px,#e6e6e6 14px)"></div>
<svg class="a" style="left:1008px;top:508px" width="14" height="30" viewBox="0 0 14 30"><path d="M4 10 L7 6.5 L10 10 Z" fill="#333"/><rect x="1.5" y="14.5" width="11" height="10" fill="#f4f4f4" stroke="#7a7a7a"/></svg>
<div id="tbl" class="a" style="left:286px;top:507px"></div>
<svg class="a" style="left:0;top:0" width="1024" height="718" viewBox="0 0 1024 718">
<rect x="286" y="507.5" width="1.5" height="210" fill="#e4e4e4"/>
<rect x="287.5" y="507.5" width="488" height="15.5" fill="#f5c8ba"/>
<rect x="287.5" y="523" width="488" height="16.2" fill="#3399fa"/>
<path d="M287.5 539.2 H775.5 M287.5 555.4 H775.5 M287.5 571.6 H775.5 M287.5 587.8 H775.5 M287.5 604.0 H775.5 M287.5 620.2 H775.5 M287.5 636.4 H775.5 M287.5 652.6 H775.5 M287.5 668.8 H775.5 M287.5 685.0 H775.5 M287.5 701.2 H775.5 M287.5 717.4 H775.5 M326.7 523 V718 M438.9 523 V718 M551 523 V718 M662.8 523 V718 M775.5 523 V718" stroke="#bdbdbd" stroke-width="1" fill="none"/>
<path d="M326.7 509 V521 M438.9 509 V521 M551 509 V521 M662.8 509 V521" stroke="#e0b0a8" stroke-width="1"/>
<g font-family="Liberation Sans" font-size="9.9">
<text x="292.2" y="519" fill="#3a2a2a">Index</text><text x="332.3" y="519" fill="#3a2a2a">Date</text>
<text x="466.4" y="519" fill="#e03838" xml:space="preserve">vint1  [°C]</text>
<text x="583.3" y="519" fill="#6040b8" xml:space="preserve">v1  [°C]</text>
<text x="689.3" y="519" fill="#8a9438" xml:space="preserve">v2  [%RH]</text>
<text x="290.3" y="534.8" fill="#d8ecff" xml:space="preserve">1</text>
<text x="330.0" y="534.8" fill="#d8ecff" xml:space="preserve">09/12/2015 17:04:09</text>
<text x="441.7" y="534.8" fill="#d8ecff" xml:space="preserve">27,8</text>
<text x="553.8" y="534.8" fill="#d8ecff" xml:space="preserve">27,0</text>
<text x="665.9" y="534.8" fill="#d8ecff" xml:space="preserve">37,4</text>
<text x="290.3" y="551.0" fill="#2a2a2a" xml:space="preserve">2</text>
<text x="330.0" y="551.0" fill="#2a2a2a" xml:space="preserve">09/12/2015 17:05:09</text>
<text x="441.7" y="551.0" fill="#2a2a2a" xml:space="preserve">28,0</text>
<text x="553.8" y="551.0" fill="#2a2a2a" xml:space="preserve">27,0</text>
<text x="665.9" y="551.0" fill="#2a2a2a" xml:space="preserve">33,1</text>
<text x="290.3" y="567.2" fill="#2a2a2a" xml:space="preserve">3</text>
<text x="330.0" y="567.2" fill="#2a2a2a" xml:space="preserve">09/12/2015 17:06:09</text>
<text x="441.7" y="567.2" fill="#2a2a2a" xml:space="preserve">28,0</text>
<text x="553.8" y="567.2" fill="#2a2a2a" xml:space="preserve">26,9</text>
<text x="665.9" y="567.2" fill="#2a2a2a" xml:space="preserve">37,3</text>
<text x="290.3" y="583.4" fill="#2a2a2a" xml:space="preserve">4</text>
<text x="330.0" y="583.4" fill="#2a2a2a" xml:space="preserve">09/12/2015 17:07:09</text>
<text x="441.7" y="583.4" fill="#2a2a2a" xml:space="preserve">28,0</text>
<text x="553.8" y="583.4" fill="#2a2a2a" xml:space="preserve">26,9</text>
<text x="665.9" y="583.4" fill="#2a2a2a" xml:space="preserve">33,9</text>
<text x="290.3" y="599.6" fill="#2a2a2a" xml:space="preserve">5</text>
<text x="330.0" y="599.6" fill="#2a2a2a" xml:space="preserve">09/12/2015 17:08:09</text>
<text x="441.7" y="599.6" fill="#2a2a2a" xml:space="preserve">27,9</text>
<text x="553.8" y="599.6" fill="#2a2a2a" xml:space="preserve">26,9</text>
<text x="665.9" y="599.6" fill="#2a2a2a" xml:space="preserve">34,1</text>
<text x="290.3" y="615.8" fill="#2a2a2a" xml:space="preserve">6</text>
<text x="330.0" y="615.8" fill="#2a2a2a" xml:space="preserve">09/12/2015 17:09:09</text>
<text x="441.7" y="615.8" fill="#2a2a2a" xml:space="preserve">27,8</text>
<text x="553.8" y="615.8" fill="#2a2a2a" xml:space="preserve">26,9</text>
<text x="665.9" y="615.8" fill="#2a2a2a" xml:space="preserve">33,4</text>
<text x="290.3" y="632.0" fill="#2a2a2a" xml:space="preserve">7</text>
<text x="330.0" y="632.0" fill="#2a2a2a" xml:space="preserve">09/12/2015 17:10:09</text>
<text x="441.7" y="632.0" fill="#2a2a2a" xml:space="preserve">27,8</text>
<text x="553.8" y="632.0" fill="#2a2a2a" xml:space="preserve">27,0</text>
<text x="665.9" y="632.0" fill="#2a2a2a" xml:space="preserve">33,7</text>
<text x="290.3" y="648.2" fill="#2a2a2a" xml:space="preserve">8</text>
<text x="330.0" y="648.2" fill="#2a2a2a" xml:space="preserve">09/12/2015 17:11:09</text>
<text x="441.7" y="648.2" fill="#2a2a2a" xml:space="preserve">27,7</text>
<text x="553.8" y="648.2" fill="#2a2a2a" xml:space="preserve">27,0</text>
<text x="665.9" y="648.2" fill="#2a2a2a" xml:space="preserve">32,2</text>
<text x="290.3" y="664.4" fill="#2a2a2a" xml:space="preserve">9</text>
<text x="330.0" y="664.4" fill="#2a2a2a" xml:space="preserve">09/12/2015 17:12:09</text>
<text x="441.7" y="664.4" fill="#2a2a2a" xml:space="preserve">27,6</text>
<text x="553.8" y="664.4" fill="#2a2a2a" xml:space="preserve">27,0</text>
<text x="665.9" y="664.4" fill="#2a2a2a" xml:space="preserve">32,1</text>
<text x="290.3" y="680.6" fill="#2a2a2a" xml:space="preserve">10</text>
<text x="330.0" y="680.6" fill="#2a2a2a" xml:space="preserve">09/12/2015 17:13:09</text>
<text x="441.7" y="680.6" fill="#2a2a2a" xml:space="preserve">27,5</text>
<text x="553.8" y="680.6" fill="#2a2a2a" xml:space="preserve">27,0</text>
<text x="665.9" y="680.6" fill="#2a2a2a" xml:space="preserve">32,4</text>
<text x="290.3" y="696.8" fill="#2a2a2a" xml:space="preserve">11</text>
<text x="330.0" y="696.8" fill="#2a2a2a" xml:space="preserve">09/12/2015 17:14:09</text>
<text x="441.7" y="696.8" fill="#2a2a2a" xml:space="preserve">27,5</text>
<text x="553.8" y="696.8" fill="#2a2a2a" xml:space="preserve">26,9</text>
<text x="665.9" y="696.8" fill="#2a2a2a" xml:space="preserve">31,8</text>
<text x="290.3" y="713.0" fill="#2a2a2a" xml:space="preserve">12</text>
<text x="330.0" y="713.0" fill="#2a2a2a" xml:space="preserve">09/12/2015 17:15:09</text>
<text x="441.7" y="713.0" fill="#2a2a2a" xml:space="preserve">27,4</text>
<text x="553.8" y="713.0" fill="#2a2a2a" xml:space="preserve">26,8</text>
<text x="665.9" y="713.0" fill="#2a2a2a" xml:space="preserve">31,9</text>
</g></svg>
<div class="a" style="left:0;top:716px;width:1024px;height:2px;background:#fff"></div>
</body></html>
